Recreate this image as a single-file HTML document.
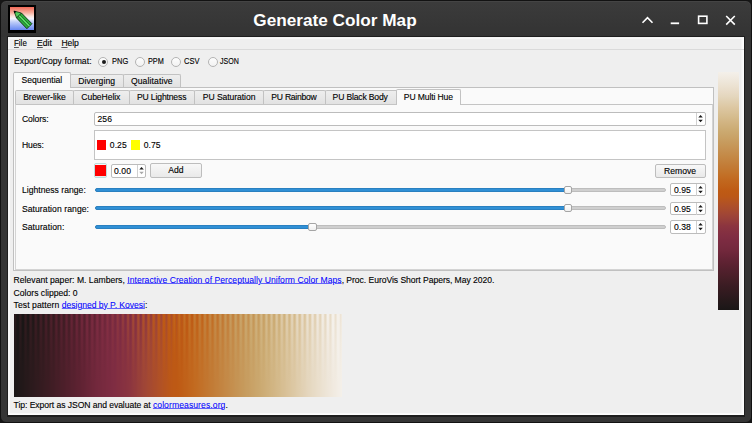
<!DOCTYPE html>
<html><head><meta charset="utf-8">
<style>
*{margin:0;padding:0;box-sizing:border-box}
html,body{width:752px;height:423px;overflow:hidden;background:#161616}
body{position:relative;font-family:"Liberation Sans",sans-serif;font-size:8.6px;color:#000;-webkit-text-stroke:0.12px #000}
.a{position:absolute}
.t{position:absolute;white-space:nowrap;line-height:10px;height:10px}
#frame{left:0;top:0;width:752px;height:423px;border-radius:6px;background:linear-gradient(#3b3b3b 2px,#333333 36px,#353535 36px);border:1px solid #121212;box-shadow:inset 0 1px 0 #444}
#content{left:8px;top:37px;width:736px;height:378px;background:#efefef;border:1px solid #fdfdfd;border-top-color:#f4f4f4;border-left-color:#f6f6f6;box-shadow:inset -1.5px -1px 0 #f9f9f9, inset 1px 1px 0 #f7f7f7}
#cshadow{left:7px;top:36px;width:738px;height:380.5px;background:#1e1e1e}
.title{left:0;top:9.5px;width:670px;text-align:center;color:#fff;-webkit-text-stroke:0;font-weight:bold;font-size:17.2px;line-height:20px;height:20px}
.u{text-decoration:underline;text-underline-offset:1px;text-decoration-color:#555}
.link{color:#0000ff;-webkit-text-stroke:0.05px #0000ff;text-decoration:underline;text-underline-offset:0px;text-decoration-color:rgba(40,40,255,0.7)}
.radio{width:10px;height:10px;border-radius:50%;border:1px solid #b4b4b4;background:linear-gradient(#fdfdfd,#f2f2f2)}
.dot{left:2.5px;top:2.5px;width:4px;height:4px;border-radius:50%;background:#1a1a1a}
.tab{border:1px solid #c2c2c2;border-bottom:none;background:linear-gradient(#eeeeee,#e2e2e2);border-radius:2px 2px 0 0}
.tab.sel{background:#fafafa}
.pane{border:1px solid #c4c4c4;background:#fafafa}
.spin{background:#fff;border:1px solid #bcbcbc;border-radius:2px}
.btn{border:1px solid #bdbdbd;border-radius:2px;background:linear-gradient(#f8f8f8,#e9e9e9)}
.track{height:4px;border-radius:2px;background:#cfcfcf;border:1px solid #bdbdbd}
.fill{height:4px;border-radius:2px;background:#3090d6;border:1px solid #2a80c0}
.handle{width:8.6px;height:8px;border-radius:2px;border:1px solid #a5a5a5;background:linear-gradient(#fefefe,#f0f0f0)}
</style></head><body>
<div id="frame" class="a"></div>
<!-- icon -->
<div class="a" style="left:8px;top:5px;width:28px;height:28px;background:#000"></div>
<div class="a" style="left:10px;top:7px;width:23.5px;height:23px;background:linear-gradient(#f06a58 0%,#f6b0a0 25%,#fbe4dc 40%,#f4f4fc 50%,#c0cef8 65%,#6888f2 100%)"></div>
<svg class="a" style="left:8px;top:5px" width="28" height="28" viewBox="0 0 28 28">
  <path d="M8.5 12.9 L13.4 8 L23.9 18.7 L18.9 23.7 Z" fill="#2fae3e" stroke="#0b2e12" stroke-width="0.9" stroke-linejoin="round"/>
  <path d="M11 10.5 L21.4 21.2" stroke="#5fe06a" stroke-width="1.4"/>
  <path d="M10.1 11.3 L20.6 22 M11.8 9.6 L22.3 20.3" stroke="#0e4a18" stroke-width="0.6"/>
  <path d="M6.1 6.1 L13.4 8 L8.5 12.9 Z" fill="#52cc5c" stroke="#0b2e12" stroke-width="0.8" stroke-linejoin="round"/>
  <path d="M5.7 5.7 L8.4 6.5 L6.5 8.4 Z" fill="#000"/>
</svg>
<div class="t title">Generate Color Map</div>
<!-- title buttons -->
<svg class="a" style="left:630px;top:5px" width="120" height="30" viewBox="0 0 120 30">
  <path d="M12.5 17.8 L17.5 12.6 L22.5 17.8" fill="none" stroke="#fff" stroke-width="1.6"/>
  <path d="M40.7 18.3 H49.1" fill="none" stroke="#fff" stroke-width="1.8"/>
  <rect x="68.6" y="11.2" width="8.3" height="7.2" fill="none" stroke="#fff" stroke-width="1.6"/>
  <path d="M96.2 11 L104.8 19.6 M104.8 11 L96.2 19.6" fill="none" stroke="#fff" stroke-width="1.6"/>
</svg>
<div id="cshadow" class="a"></div>
<div id="content" class="a"></div>
<!-- menu -->
<div class="t" style="transform:scaleX(0.925);transform-origin:0 0;left:14px;top:38px"><span class="u">F</span>ile</div>
<div class="t" style="letter-spacing:0.004px;left:37px;top:38px"><span class="u">E</span>dit</div>
<div class="t" style="letter-spacing:-0.056px;left:61.4px;top:38px"><span class="u">H</span>elp</div>
<div class="a" style="left:8px;top:49px;width:736px;height:1px;background:#dadada"></div>
<!-- export format -->
<div class="t" style="letter-spacing:0.062px;left:14px;top:56px">Export/Copy format:</div>
<div class="a radio" style="left:98px;top:56.7px"><div class="a dot"></div></div>
<div class="t" style="transform:scaleX(0.874);transform-origin:0 0;left:111.7px;top:56px">PNG</div>
<div class="a radio" style="left:134.8px;top:56.7px"></div>
<div class="t" style="transform:scaleX(0.850);transform-origin:0 0;left:148.3px;top:56px">PPM</div>
<div class="a radio" style="left:171px;top:56.7px"></div>
<div class="t" style="transform:scaleX(0.874);transform-origin:0 0;left:184px;top:56px">CSV</div>
<div class="a radio" style="left:207.6px;top:56.7px"></div>
<div class="t" style="transform:scaleX(0.823);transform-origin:0 0;left:220.3px;top:56px">JSON</div>
<!-- outer pane & tabs -->
<div class="a pane" style="left:13px;top:87px;width:701px;height:184px;border-color:#c0c0c0"></div>
<div class="a tab" style="left:70px;top:73.5px;width:54px;height:13.5px"></div>
<div class="t" style="letter-spacing:0.074px;left:78.2px;top:75.5px">Diverging</div>
<div class="a tab" style="left:123px;top:73.5px;width:58px;height:13.5px"></div>
<div class="t" style="letter-spacing:0.116px;left:130.9px;top:75.5px">Qualitative</div>
<div class="a tab sel" style="left:13px;top:72px;width:58px;height:16px"></div>
<div class="t" style="letter-spacing:0.017px;left:21.5px;top:75px">Sequential</div>
<!-- inner pane & tabs -->
<div class="a pane" style="left:15px;top:104px;width:698px;height:166px;border-color:#d4d4d4;border-top-color:#c4c4c4"></div>
<div class="a tab" style="left:15px;top:90px;width:59px;height:14px"></div>
<div class="t" style="letter-spacing:-0.048px;left:23.2px;top:92px">Brewer-like</div>
<div class="a tab" style="left:73px;top:90px;width:57px;height:14px"></div>
<div class="t" style="letter-spacing:-0.070px;left:81.3px;top:92px">CubeHelix</div>
<div class="a tab" style="left:129px;top:90px;width:66px;height:14px"></div>
<div class="t" style="letter-spacing:-0.152px;left:137px;top:92px">PU Lightness</div>
<div class="a tab" style="left:194px;top:90px;width:70px;height:14px"></div>
<div class="t" style="letter-spacing:-0.073px;left:202.8px;top:92px">PU Saturation</div>
<div class="a tab" style="left:263px;top:90px;width:63px;height:14px"></div>
<div class="t" style="letter-spacing:-0.249px;left:271.3px;top:92px">PU Rainbow</div>
<div class="a tab" style="left:325px;top:90px;width:73px;height:14px"></div>
<div class="t" style="letter-spacing:-0.169px;left:332.6px;top:92px">PU Black Body</div>
<div class="a tab sel" style="left:396.3px;top:89px;width:64.5px;height:16px"></div>
<div class="t" style="letter-spacing:-0.126px;left:403.8px;top:91.5px">PU Multi Hue</div>
<!-- form -->
<div class="t" style="letter-spacing:-0.096px;left:21.9px;top:114px">Colors:</div>
<div class="a spin" style="left:94px;top:112px;width:611.5px;height:14px"></div>
<div class="a" style="left:696px;top:113px;width:1px;height:12px;background:#d0d0d0"></div>
<svg class="a" style="left:697px;top:113.0px" width="8" height="12"><path d="M1.3 4.5 L3.55 1.9 L5.8 4.5Z M1.3 6.8 L3.55 9.2 L5.8 6.8Z" fill="#1a1a1a"/></svg>
<div class="t" style="letter-spacing:0.091px;left:97.4px;top:114px">256</div>
<div class="t" style="letter-spacing:-0.113px;left:21.9px;top:140px">Hues:</div>
<div class="a" style="left:94px;top:130px;width:612px;height:30px;background:#fff;border:1px solid #c4c4c4"></div>
<div class="a" style="left:96.5px;top:140px;width:9.5px;height:9.5px;background:#ff0000"></div>
<div class="t" style="letter-spacing:0.079px;left:109.8px;top:140px">0.25</div>
<div class="a" style="left:130.6px;top:140px;width:9.5px;height:9.5px;background:#ffff00"></div>
<div class="t" style="letter-spacing:0.079px;left:143.7px;top:140px">0.75</div>
<div class="a btn" style="left:94.4px;top:163.4px;width:12.2px;height:14.2px;border-color:#bfdcdc"></div>
<div class="a" style="left:95.2px;top:165px;width:10.6px;height:11px;background:#ff0000"></div>
<div class="a spin" style="left:110.8px;top:164.2px;width:34.8px;height:13.4px"></div>
<div class="a" style="left:136.5px;top:165px;width:1px;height:12px;background:#d0d0d0"></div>
<svg class="a" style="left:137.5px;top:164.9px" width="8" height="12"><path d="M1.3 4.5 L3.55 1.9 L5.8 4.5Z" fill="#1a1a1a"/><path d="M1.3 6.8 L3.55 9.2 L5.8 6.8Z" fill="#a8a8a8"/></svg>
<div class="t" style="letter-spacing:0.079px;left:114px;top:165.5px">0.00</div>
<div class="a btn" style="left:150.2px;top:163px;width:51.4px;height:14.5px"></div>
<div class="t" style="left:150.2px;top:165px;width:51.4px;text-align:center">Add</div>
<div class="a btn" style="left:654.6px;top:163.9px;width:51px;height:13.8px"></div>
<div class="t" style="left:654.6px;top:165.5px;width:51px;text-align:center">Remove</div>
<!-- sliders -->
<div class="t" style="letter-spacing:0.023px;left:21.9px;top:185px">Lightness range:</div>
<div class="a track" style="left:94.8px;top:187.6px;width:571px"></div>
<div class="a fill" style="left:94.8px;top:187.6px;width:472px"></div>
<div class="a handle" style="left:563.8px;top:185.5px"></div>
<div class="a spin" style="left:670.3px;top:183.3px;width:35.3px;height:13.2px"></div>
<div class="a" style="left:696.4px;top:184px;width:1px;height:12px;background:#d0d0d0"></div>
<svg class="a" style="left:697px;top:184.0px" width="8" height="12"><path d="M1.3 4.5 L3.55 1.9 L5.8 4.5Z M1.3 6.8 L3.55 9.2 L5.8 6.8Z" fill="#1a1a1a"/></svg>
<div class="t" style="letter-spacing:0.079px;left:673.9px;top:185px">0.95</div>

<div class="t" style="letter-spacing:0.073px;left:21.9px;top:203.7px">Saturation range:</div>
<div class="a track" style="left:94.8px;top:206.4px;width:571px"></div>
<div class="a fill" style="left:94.8px;top:206.4px;width:472px"></div>
<div class="a handle" style="left:563.8px;top:204.2px"></div>
<div class="a spin" style="left:670.3px;top:201.8px;width:35.3px;height:13.2px"></div>
<div class="a" style="left:696.4px;top:202.5px;width:1px;height:12px;background:#d0d0d0"></div>
<svg class="a" style="left:697px;top:202.5px" width="8" height="12"><path d="M1.3 4.5 L3.55 1.9 L5.8 4.5Z M1.3 6.8 L3.55 9.2 L5.8 6.8Z" fill="#1a1a1a"/></svg>
<div class="t" style="letter-spacing:0.079px;left:673.9px;top:203.7px">0.95</div>

<div class="t" style="letter-spacing:0.083px;left:21.9px;top:222.3px">Saturation:</div>
<div class="a track" style="left:94.8px;top:225.1px;width:571px"></div>
<div class="a fill" style="left:94.8px;top:225.1px;width:216px"></div>
<div class="a handle" style="left:308.2px;top:222.6px"></div>
<div class="a spin" style="left:670.3px;top:220.4px;width:35.3px;height:13.2px"></div>
<div class="a" style="left:696.4px;top:221px;width:1px;height:12px;background:#d0d0d0"></div>
<svg class="a" style="left:697px;top:221.1px" width="8" height="12"><path d="M1.3 4.5 L3.55 1.9 L5.8 4.5Z M1.3 6.8 L3.55 9.2 L5.8 6.8Z" fill="#1a1a1a"/></svg>
<div class="t" style="letter-spacing:0.079px;left:673.9px;top:222.3px">0.38</div>

<!-- vertical colorbar -->
<div class="a" style="left:718px;top:72px;width:20.5px;height:238px;background:linear-gradient(to bottom,#f4f0ea 0.0%,#f1ebe2 2.1%,#eee6d9 4.2%,#ebe1d0 6.2%,#e8dbc7 8.3%,#e4d6bd 10.4%,#e0cfb0 12.5%,#ddc8a4 14.6%,#d9c299 16.7%,#d5bc8e 18.8%,#d2b584 20.8%,#ceaf7a 22.9%,#cba970 25.0%,#c9a368 27.1%,#c79c5f 29.2%,#c69657 31.2%,#c58f4f 33.3%,#c48946 35.4%,#c3823e 37.5%,#c27b36 39.6%,#c2752d 41.7%,#c26e25 43.8%,#c1671e 45.8%,#c06119 47.9%,#be5a14 50.0%,#bc5816 52.1%,#b55420 54.2%,#ae4f29 56.2%,#a64a30 58.3%,#9e4437 60.4%,#953d3b 62.5%,#8c353f 64.6%,#863141 66.7%,#812e42 68.8%,#7c2b41 70.8%,#772a3f 72.9%,#72283c 75.0%,#6a2538 77.1%,#612334 79.2%,#5a2130 81.2%,#52202d 83.3%,#4b1f29 85.4%,#431e26 87.5%,#3b1c23 89.6%,#351b20 91.7%,#2e1a1e 93.8%,#27191b 95.8%,#211819 97.9%,#1a1616 100.0%)"></div>

<!-- bottom text -->
<div class="t nofix" style="left:13.6px;top:275px"><span style="letter-spacing:0.015px">Relevant paper: M. Lambers, </span><span class="link" style="letter-spacing:0.035px">Interactive Creation of Perceptually Uniform Color Maps</span><span style="letter-spacing:-0.052px">, Proc. EuroVis Short Papers, May 2020.</span></div>
<div class="t" style="letter-spacing:0.002px;left:13.6px;top:287.7px">Colors clipped: 0</div>
<div class="t nofix" style="left:13.6px;top:300.4px"><span style="letter-spacing:0.075px">Test pattern </span><span class="link" style="letter-spacing:-0.042px">designed by P. Kovesi</span>:</div>
<svg width="328" height="83" viewBox="0 0 328 83" style="position:absolute;left:14px;top:314px;display:block" shape-rendering="crispEdges"><defs><linearGradient id="g0" x1="0" y1="0" x2="0" y2="1"><stop offset="0.00" stop-color="#24181a"/><stop offset="0.17" stop-color="#211819"/><stop offset="0.33" stop-color="#1f1718"/><stop offset="0.50" stop-color="#1d1717"/><stop offset="0.67" stop-color="#1c1617"/><stop offset="0.83" stop-color="#1b1616"/><stop offset="1.00" stop-color="#1a1616"/></linearGradient><linearGradient id="g1" x1="0" y1="0" x2="0" y2="1"><stop offset="0.00" stop-color="#2b1a1c"/><stop offset="0.17" stop-color="#26191b"/><stop offset="0.33" stop-color="#221819"/><stop offset="0.50" stop-color="#1f1718"/><stop offset="0.67" stop-color="#1d1717"/><stop offset="0.83" stop-color="#1c1617"/><stop offset="1.00" stop-color="#1b1617"/></linearGradient><linearGradient id="g2" x1="0" y1="0" x2="0" y2="1"><stop offset="0.00" stop-color="#1e1717"/><stop offset="0.17" stop-color="#1d1717"/><stop offset="0.33" stop-color="#1d1717"/><stop offset="0.50" stop-color="#1d1717"/><stop offset="0.67" stop-color="#1d1717"/><stop offset="0.83" stop-color="#1c1717"/><stop offset="1.00" stop-color="#1c1717"/></linearGradient><linearGradient id="g3" x1="0" y1="0" x2="0" y2="1"><stop offset="0.00" stop-color="#1a1616"/><stop offset="0.17" stop-color="#1a1616"/><stop offset="0.33" stop-color="#1a1616"/><stop offset="0.50" stop-color="#1a1616"/><stop offset="0.67" stop-color="#1c1617"/><stop offset="0.83" stop-color="#1d1717"/><stop offset="1.00" stop-color="#1d1717"/></linearGradient><linearGradient id="g4" x1="0" y1="0" x2="0" y2="1"><stop offset="0.00" stop-color="#1a1616"/><stop offset="0.17" stop-color="#1a1616"/><stop offset="0.33" stop-color="#1a1616"/><stop offset="0.50" stop-color="#1c1617"/><stop offset="0.67" stop-color="#1d1717"/><stop offset="0.83" stop-color="#1e1718"/><stop offset="1.00" stop-color="#1e1718"/></linearGradient><linearGradient id="g5" x1="0" y1="0" x2="0" y2="1"><stop offset="0.00" stop-color="#26191b"/><stop offset="0.17" stop-color="#24191a"/><stop offset="0.33" stop-color="#231819"/><stop offset="0.50" stop-color="#211819"/><stop offset="0.67" stop-color="#201818"/><stop offset="0.83" stop-color="#201718"/><stop offset="1.00" stop-color="#1f1718"/></linearGradient><linearGradient id="g6" x1="0" y1="0" x2="0" y2="1"><stop offset="0.00" stop-color="#301b1e"/><stop offset="0.17" stop-color="#2b1a1d"/><stop offset="0.33" stop-color="#27191b"/><stop offset="0.50" stop-color="#24191a"/><stop offset="0.67" stop-color="#221819"/><stop offset="0.83" stop-color="#211819"/><stop offset="1.00" stop-color="#201818"/></linearGradient><linearGradient id="g7" x1="0" y1="0" x2="0" y2="1"><stop offset="0.00" stop-color="#25191a"/><stop offset="0.17" stop-color="#24181a"/><stop offset="0.33" stop-color="#231819"/><stop offset="0.50" stop-color="#221819"/><stop offset="0.67" stop-color="#221819"/><stop offset="0.83" stop-color="#211819"/><stop offset="1.00" stop-color="#211819"/></linearGradient><linearGradient id="g8" x1="0" y1="0" x2="0" y2="1"><stop offset="0.00" stop-color="#1a1616"/><stop offset="0.17" stop-color="#1a1616"/><stop offset="0.33" stop-color="#1c1717"/><stop offset="0.50" stop-color="#1f1718"/><stop offset="0.67" stop-color="#211819"/><stop offset="0.83" stop-color="#221819"/><stop offset="1.00" stop-color="#221819"/></linearGradient><linearGradient id="g9" x1="0" y1="0" x2="0" y2="1"><stop offset="0.00" stop-color="#1a1616"/><stop offset="0.17" stop-color="#1a1616"/><stop offset="0.33" stop-color="#1e1717"/><stop offset="0.50" stop-color="#201818"/><stop offset="0.67" stop-color="#221819"/><stop offset="0.83" stop-color="#231819"/><stop offset="1.00" stop-color="#231819"/></linearGradient><linearGradient id="g10" x1="0" y1="0" x2="0" y2="1"><stop offset="0.00" stop-color="#291a1c"/><stop offset="0.17" stop-color="#28191b"/><stop offset="0.33" stop-color="#26191b"/><stop offset="0.50" stop-color="#25191a"/><stop offset="0.67" stop-color="#25191a"/><stop offset="0.83" stop-color="#24191a"/><stop offset="1.00" stop-color="#24191a"/></linearGradient><linearGradient id="g11" x1="0" y1="0" x2="0" y2="1"><stop offset="0.00" stop-color="#351b20"/><stop offset="0.17" stop-color="#301b1e"/><stop offset="0.33" stop-color="#2c1a1d"/><stop offset="0.50" stop-color="#291a1c"/><stop offset="0.67" stop-color="#27191b"/><stop offset="0.83" stop-color="#26191a"/><stop offset="1.00" stop-color="#25191a"/></linearGradient><linearGradient id="g12" x1="0" y1="0" x2="0" y2="1"><stop offset="0.00" stop-color="#2c1a1d"/><stop offset="0.17" stop-color="#2a1a1c"/><stop offset="0.33" stop-color="#291a1c"/><stop offset="0.50" stop-color="#28191b"/><stop offset="0.67" stop-color="#27191b"/><stop offset="0.83" stop-color="#26191b"/><stop offset="1.00" stop-color="#26191b"/></linearGradient><linearGradient id="g13" x1="0" y1="0" x2="0" y2="1"><stop offset="0.00" stop-color="#1b1616"/><stop offset="0.17" stop-color="#1f1718"/><stop offset="0.33" stop-color="#221819"/><stop offset="0.50" stop-color="#24191a"/><stop offset="0.67" stop-color="#26191a"/><stop offset="0.83" stop-color="#27191b"/><stop offset="1.00" stop-color="#27191b"/></linearGradient><linearGradient id="g14" x1="0" y1="0" x2="0" y2="1"><stop offset="0.00" stop-color="#1a1616"/><stop offset="0.17" stop-color="#1e1718"/><stop offset="0.33" stop-color="#221819"/><stop offset="0.50" stop-color="#25191a"/><stop offset="0.67" stop-color="#27191b"/><stop offset="0.83" stop-color="#28191b"/><stop offset="1.00" stop-color="#281a1b"/></linearGradient><linearGradient id="g15" x1="0" y1="0" x2="0" y2="1"><stop offset="0.00" stop-color="#2c1a1d"/><stop offset="0.17" stop-color="#2b1a1c"/><stop offset="0.33" stop-color="#2a1a1c"/><stop offset="0.50" stop-color="#2a1a1c"/><stop offset="0.67" stop-color="#291a1c"/><stop offset="0.83" stop-color="#291a1c"/><stop offset="1.00" stop-color="#291a1c"/></linearGradient><linearGradient id="g16" x1="0" y1="0" x2="0" y2="1"><stop offset="0.00" stop-color="#3a1c22"/><stop offset="0.17" stop-color="#351b20"/><stop offset="0.33" stop-color="#311b1f"/><stop offset="0.50" stop-color="#2e1b1e"/><stop offset="0.67" stop-color="#2c1a1d"/><stop offset="0.83" stop-color="#2b1a1c"/><stop offset="1.00" stop-color="#2a1a1c"/></linearGradient><linearGradient id="g17" x1="0" y1="0" x2="0" y2="1"><stop offset="0.00" stop-color="#331b1f"/><stop offset="0.17" stop-color="#311b1f"/><stop offset="0.33" stop-color="#2f1b1e"/><stop offset="0.50" stop-color="#2d1a1d"/><stop offset="0.67" stop-color="#2c1a1d"/><stop offset="0.83" stop-color="#2b1a1c"/><stop offset="1.00" stop-color="#2b1a1c"/></linearGradient><linearGradient id="g18" x1="0" y1="0" x2="0" y2="1"><stop offset="0.00" stop-color="#221819"/><stop offset="0.17" stop-color="#25191a"/><stop offset="0.33" stop-color="#28191b"/><stop offset="0.50" stop-color="#2a1a1c"/><stop offset="0.67" stop-color="#2b1a1c"/><stop offset="0.83" stop-color="#2c1a1d"/><stop offset="1.00" stop-color="#2c1a1d"/></linearGradient><linearGradient id="g19" x1="0" y1="0" x2="0" y2="1"><stop offset="0.00" stop-color="#1e1717"/><stop offset="0.17" stop-color="#231819"/><stop offset="0.33" stop-color="#26191b"/><stop offset="0.50" stop-color="#291a1c"/><stop offset="0.67" stop-color="#2b1a1d"/><stop offset="0.83" stop-color="#2d1a1d"/><stop offset="1.00" stop-color="#2d1a1d"/></linearGradient><linearGradient id="g20" x1="0" y1="0" x2="0" y2="1"><stop offset="0.00" stop-color="#2e1a1d"/><stop offset="0.17" stop-color="#2e1a1d"/><stop offset="0.33" stop-color="#2e1a1d"/><stop offset="0.50" stop-color="#2e1a1d"/><stop offset="0.67" stop-color="#2e1a1d"/><stop offset="0.83" stop-color="#2e1a1e"/><stop offset="1.00" stop-color="#2e1a1e"/></linearGradient><linearGradient id="g21" x1="0" y1="0" x2="0" y2="1"><stop offset="0.00" stop-color="#3f1d24"/><stop offset="0.17" stop-color="#391c22"/><stop offset="0.33" stop-color="#361b20"/><stop offset="0.50" stop-color="#331b1f"/><stop offset="0.67" stop-color="#311b1e"/><stop offset="0.83" stop-color="#2f1b1e"/><stop offset="1.00" stop-color="#2f1b1e"/></linearGradient><linearGradient id="g22" x1="0" y1="0" x2="0" y2="1"><stop offset="0.00" stop-color="#3a1c22"/><stop offset="0.17" stop-color="#371c21"/><stop offset="0.33" stop-color="#341b20"/><stop offset="0.50" stop-color="#321b1f"/><stop offset="0.67" stop-color="#311b1f"/><stop offset="0.83" stop-color="#301b1e"/><stop offset="1.00" stop-color="#301b1e"/></linearGradient><linearGradient id="g23" x1="0" y1="0" x2="0" y2="1"><stop offset="0.00" stop-color="#291a1c"/><stop offset="0.17" stop-color="#2b1a1c"/><stop offset="0.33" stop-color="#2d1a1d"/><stop offset="0.50" stop-color="#2f1b1e"/><stop offset="0.67" stop-color="#301b1e"/><stop offset="0.83" stop-color="#311b1f"/><stop offset="1.00" stop-color="#311b1f"/></linearGradient><linearGradient id="g24" x1="0" y1="0" x2="0" y2="1"><stop offset="0.00" stop-color="#221819"/><stop offset="0.17" stop-color="#27191b"/><stop offset="0.33" stop-color="#2b1a1c"/><stop offset="0.50" stop-color="#2e1a1d"/><stop offset="0.67" stop-color="#301b1e"/><stop offset="0.83" stop-color="#311b1f"/><stop offset="1.00" stop-color="#321b1f"/></linearGradient><linearGradient id="g25" x1="0" y1="0" x2="0" y2="1"><stop offset="0.00" stop-color="#301b1e"/><stop offset="0.17" stop-color="#311b1f"/><stop offset="0.33" stop-color="#321b1f"/><stop offset="0.50" stop-color="#321b1f"/><stop offset="0.67" stop-color="#331b1f"/><stop offset="0.83" stop-color="#331b1f"/><stop offset="1.00" stop-color="#331b1f"/></linearGradient><linearGradient id="g26" x1="0" y1="0" x2="0" y2="1"><stop offset="0.00" stop-color="#431d26"/><stop offset="0.17" stop-color="#3e1d24"/><stop offset="0.33" stop-color="#3a1c22"/><stop offset="0.50" stop-color="#371c21"/><stop offset="0.67" stop-color="#351b20"/><stop offset="0.83" stop-color="#341b20"/><stop offset="1.00" stop-color="#341b20"/></linearGradient><linearGradient id="g27" x1="0" y1="0" x2="0" y2="1"><stop offset="0.00" stop-color="#421d25"/><stop offset="0.17" stop-color="#3e1d24"/><stop offset="0.33" stop-color="#3a1c22"/><stop offset="0.50" stop-color="#381c21"/><stop offset="0.67" stop-color="#361c21"/><stop offset="0.83" stop-color="#351b20"/><stop offset="1.00" stop-color="#351b20"/></linearGradient><linearGradient id="g28" x1="0" y1="0" x2="0" y2="1"><stop offset="0.00" stop-color="#301b1e"/><stop offset="0.17" stop-color="#321b1f"/><stop offset="0.33" stop-color="#331b1f"/><stop offset="0.50" stop-color="#341b20"/><stop offset="0.67" stop-color="#351b20"/><stop offset="0.83" stop-color="#361b20"/><stop offset="1.00" stop-color="#361b20"/></linearGradient><linearGradient id="g29" x1="0" y1="0" x2="0" y2="1"><stop offset="0.00" stop-color="#27191b"/><stop offset="0.17" stop-color="#2c1a1d"/><stop offset="0.33" stop-color="#301b1e"/><stop offset="0.50" stop-color="#331b1f"/><stop offset="0.67" stop-color="#351b20"/><stop offset="0.83" stop-color="#361c21"/><stop offset="1.00" stop-color="#371c21"/></linearGradient><linearGradient id="g30" x1="0" y1="0" x2="0" y2="1"><stop offset="0.00" stop-color="#331b1f"/><stop offset="0.17" stop-color="#341b20"/><stop offset="0.33" stop-color="#361b20"/><stop offset="0.50" stop-color="#371c21"/><stop offset="0.67" stop-color="#371c21"/><stop offset="0.83" stop-color="#381c21"/><stop offset="1.00" stop-color="#381c21"/></linearGradient><linearGradient id="g31" x1="0" y1="0" x2="0" y2="1"><stop offset="0.00" stop-color="#471e28"/><stop offset="0.17" stop-color="#431d26"/><stop offset="0.33" stop-color="#3f1d24"/><stop offset="0.50" stop-color="#3c1c23"/><stop offset="0.67" stop-color="#3a1c22"/><stop offset="0.83" stop-color="#391c22"/><stop offset="1.00" stop-color="#391c22"/></linearGradient><linearGradient id="g32" x1="0" y1="0" x2="0" y2="1"><stop offset="0.00" stop-color="#491e29"/><stop offset="0.17" stop-color="#441e27"/><stop offset="0.33" stop-color="#401d25"/><stop offset="0.50" stop-color="#3d1d24"/><stop offset="0.67" stop-color="#3b1c23"/><stop offset="0.83" stop-color="#3a1c22"/><stop offset="1.00" stop-color="#3a1c22"/></linearGradient><linearGradient id="g33" x1="0" y1="0" x2="0" y2="1"><stop offset="0.00" stop-color="#371c21"/><stop offset="0.17" stop-color="#381c21"/><stop offset="0.33" stop-color="#391c22"/><stop offset="0.50" stop-color="#3a1c22"/><stop offset="0.67" stop-color="#3a1c22"/><stop offset="0.83" stop-color="#3b1c22"/><stop offset="1.00" stop-color="#3b1c22"/></linearGradient><linearGradient id="g34" x1="0" y1="0" x2="0" y2="1"><stop offset="0.00" stop-color="#2c1a1d"/><stop offset="0.17" stop-color="#311b1e"/><stop offset="0.33" stop-color="#351b20"/><stop offset="0.50" stop-color="#381c21"/><stop offset="0.67" stop-color="#3a1c22"/><stop offset="0.83" stop-color="#3b1c23"/><stop offset="1.00" stop-color="#3c1c23"/></linearGradient><linearGradient id="g35" x1="0" y1="0" x2="0" y2="1"><stop offset="0.00" stop-color="#361b20"/><stop offset="0.17" stop-color="#381c21"/><stop offset="0.33" stop-color="#391c22"/><stop offset="0.50" stop-color="#3b1c22"/><stop offset="0.67" stop-color="#3c1c23"/><stop offset="0.83" stop-color="#3d1c23"/><stop offset="1.00" stop-color="#3d1c23"/></linearGradient><linearGradient id="g36" x1="0" y1="0" x2="0" y2="1"><stop offset="0.00" stop-color="#4b1f29"/><stop offset="0.17" stop-color="#471e28"/><stop offset="0.33" stop-color="#441e26"/><stop offset="0.50" stop-color="#411d25"/><stop offset="0.67" stop-color="#3f1d24"/><stop offset="0.83" stop-color="#3e1d24"/><stop offset="1.00" stop-color="#3e1d24"/></linearGradient><linearGradient id="g37" x1="0" y1="0" x2="0" y2="1"><stop offset="0.00" stop-color="#50202c"/><stop offset="0.17" stop-color="#4b1f29"/><stop offset="0.33" stop-color="#461e28"/><stop offset="0.50" stop-color="#431e26"/><stop offset="0.67" stop-color="#411d25"/><stop offset="0.83" stop-color="#401d24"/><stop offset="1.00" stop-color="#3f1d24"/></linearGradient><linearGradient id="g38" x1="0" y1="0" x2="0" y2="1"><stop offset="0.00" stop-color="#3f1d24"/><stop offset="0.17" stop-color="#3f1d24"/><stop offset="0.33" stop-color="#401d25"/><stop offset="0.50" stop-color="#401d25"/><stop offset="0.67" stop-color="#401d25"/><stop offset="0.83" stop-color="#401d25"/><stop offset="1.00" stop-color="#401d25"/></linearGradient><linearGradient id="g39" x1="0" y1="0" x2="0" y2="1"><stop offset="0.00" stop-color="#311b1f"/><stop offset="0.17" stop-color="#361b20"/><stop offset="0.33" stop-color="#3a1c22"/><stop offset="0.50" stop-color="#3d1d23"/><stop offset="0.67" stop-color="#3f1d24"/><stop offset="0.83" stop-color="#411d25"/><stop offset="1.00" stop-color="#411d25"/></linearGradient><linearGradient id="g40" x1="0" y1="0" x2="0" y2="1"><stop offset="0.00" stop-color="#381c21"/><stop offset="0.17" stop-color="#3b1c23"/><stop offset="0.33" stop-color="#3e1d24"/><stop offset="0.50" stop-color="#401d25"/><stop offset="0.67" stop-color="#411d25"/><stop offset="0.83" stop-color="#421d26"/><stop offset="1.00" stop-color="#421d26"/></linearGradient><linearGradient id="g41" x1="0" y1="0" x2="0" y2="1"><stop offset="0.00" stop-color="#4e1f2b"/><stop offset="0.17" stop-color="#4b1f29"/><stop offset="0.33" stop-color="#481e28"/><stop offset="0.50" stop-color="#461e27"/><stop offset="0.67" stop-color="#451e27"/><stop offset="0.83" stop-color="#441e26"/><stop offset="1.00" stop-color="#441e26"/></linearGradient><linearGradient id="g42" x1="0" y1="0" x2="0" y2="1"><stop offset="0.00" stop-color="#56212e"/><stop offset="0.17" stop-color="#51202c"/><stop offset="0.33" stop-color="#4c1f2a"/><stop offset="0.50" stop-color="#491e29"/><stop offset="0.67" stop-color="#471e28"/><stop offset="0.83" stop-color="#451e27"/><stop offset="1.00" stop-color="#451e27"/></linearGradient><linearGradient id="g43" x1="0" y1="0" x2="0" y2="1"><stop offset="0.00" stop-color="#471e28"/><stop offset="0.17" stop-color="#471e28"/><stop offset="0.33" stop-color="#461e27"/><stop offset="0.50" stop-color="#461e27"/><stop offset="0.67" stop-color="#461e27"/><stop offset="0.83" stop-color="#461e27"/><stop offset="1.00" stop-color="#461e27"/></linearGradient><linearGradient id="g44" x1="0" y1="0" x2="0" y2="1"><stop offset="0.00" stop-color="#371c21"/><stop offset="0.17" stop-color="#3b1c23"/><stop offset="0.33" stop-color="#401d24"/><stop offset="0.50" stop-color="#431d26"/><stop offset="0.67" stop-color="#451e27"/><stop offset="0.83" stop-color="#461e28"/><stop offset="1.00" stop-color="#471e28"/></linearGradient><linearGradient id="g45" x1="0" y1="0" x2="0" y2="1"><stop offset="0.00" stop-color="#3b1c23"/><stop offset="0.17" stop-color="#3f1d24"/><stop offset="0.33" stop-color="#421d26"/><stop offset="0.50" stop-color="#451e27"/><stop offset="0.67" stop-color="#471e28"/><stop offset="0.83" stop-color="#481e28"/><stop offset="1.00" stop-color="#481e28"/></linearGradient><linearGradient id="g46" x1="0" y1="0" x2="0" y2="1"><stop offset="0.00" stop-color="#51202c"/><stop offset="0.17" stop-color="#4f1f2b"/><stop offset="0.33" stop-color="#4d1f2a"/><stop offset="0.50" stop-color="#4b1f2a"/><stop offset="0.67" stop-color="#4a1f29"/><stop offset="0.83" stop-color="#491f29"/><stop offset="1.00" stop-color="#491f29"/></linearGradient><linearGradient id="g47" x1="0" y1="0" x2="0" y2="1"><stop offset="0.00" stop-color="#5c2231"/><stop offset="0.17" stop-color="#57212f"/><stop offset="0.33" stop-color="#52202d"/><stop offset="0.50" stop-color="#4f1f2b"/><stop offset="0.67" stop-color="#4c1f2a"/><stop offset="0.83" stop-color="#4b1f29"/><stop offset="1.00" stop-color="#4a1f29"/></linearGradient><linearGradient id="g48" x1="0" y1="0" x2="0" y2="1"><stop offset="0.00" stop-color="#4f202b"/><stop offset="0.17" stop-color="#4e1f2b"/><stop offset="0.33" stop-color="#4d1f2a"/><stop offset="0.50" stop-color="#4c1f2a"/><stop offset="0.67" stop-color="#4c1f2a"/><stop offset="0.83" stop-color="#4b1f2a"/><stop offset="1.00" stop-color="#4b1f2a"/></linearGradient><linearGradient id="g49" x1="0" y1="0" x2="0" y2="1"><stop offset="0.00" stop-color="#3d1d23"/><stop offset="0.17" stop-color="#421d25"/><stop offset="0.33" stop-color="#461e27"/><stop offset="0.50" stop-color="#491e28"/><stop offset="0.67" stop-color="#4b1f29"/><stop offset="0.83" stop-color="#4c1f2a"/><stop offset="1.00" stop-color="#4c1f2a"/></linearGradient><linearGradient id="g50" x1="0" y1="0" x2="0" y2="1"><stop offset="0.00" stop-color="#3f1d24"/><stop offset="0.17" stop-color="#431e26"/><stop offset="0.33" stop-color="#471e28"/><stop offset="0.50" stop-color="#4a1f29"/><stop offset="0.67" stop-color="#4c1f2a"/><stop offset="0.83" stop-color="#4d1f2a"/><stop offset="1.00" stop-color="#4d1f2b"/></linearGradient><linearGradient id="g51" x1="0" y1="0" x2="0" y2="1"><stop offset="0.00" stop-color="#54202e"/><stop offset="0.17" stop-color="#52202d"/><stop offset="0.33" stop-color="#51202c"/><stop offset="0.50" stop-color="#50202c"/><stop offset="0.67" stop-color="#4f202b"/><stop offset="0.83" stop-color="#4f1f2b"/><stop offset="1.00" stop-color="#4f1f2b"/></linearGradient><linearGradient id="g52" x1="0" y1="0" x2="0" y2="1"><stop offset="0.00" stop-color="#622334"/><stop offset="0.17" stop-color="#5c2231"/><stop offset="0.33" stop-color="#58212f"/><stop offset="0.50" stop-color="#54202e"/><stop offset="0.67" stop-color="#52202c"/><stop offset="0.83" stop-color="#50202c"/><stop offset="1.00" stop-color="#50202c"/></linearGradient><linearGradient id="g53" x1="0" y1="0" x2="0" y2="1"><stop offset="0.00" stop-color="#57212f"/><stop offset="0.17" stop-color="#55212e"/><stop offset="0.33" stop-color="#54202d"/><stop offset="0.50" stop-color="#52202d"/><stop offset="0.67" stop-color="#51202c"/><stop offset="0.83" stop-color="#51202c"/><stop offset="1.00" stop-color="#51202c"/></linearGradient><linearGradient id="g54" x1="0" y1="0" x2="0" y2="1"><stop offset="0.00" stop-color="#441e27"/><stop offset="0.17" stop-color="#481e28"/><stop offset="0.33" stop-color="#4c1f2a"/><stop offset="0.50" stop-color="#4e1f2b"/><stop offset="0.67" stop-color="#50202c"/><stop offset="0.83" stop-color="#51202c"/><stop offset="1.00" stop-color="#52202d"/></linearGradient><linearGradient id="g55" x1="0" y1="0" x2="0" y2="1"><stop offset="0.00" stop-color="#431e26"/><stop offset="0.17" stop-color="#481e28"/><stop offset="0.33" stop-color="#4c1f2a"/><stop offset="0.50" stop-color="#4f1f2b"/><stop offset="0.67" stop-color="#51202c"/><stop offset="0.83" stop-color="#52202d"/><stop offset="1.00" stop-color="#53202d"/></linearGradient><linearGradient id="g56" x1="0" y1="0" x2="0" y2="1"><stop offset="0.00" stop-color="#57212f"/><stop offset="0.17" stop-color="#56212e"/><stop offset="0.33" stop-color="#55212e"/><stop offset="0.50" stop-color="#55202e"/><stop offset="0.67" stop-color="#54202e"/><stop offset="0.83" stop-color="#54202e"/><stop offset="1.00" stop-color="#54202e"/></linearGradient><linearGradient id="g57" x1="0" y1="0" x2="0" y2="1"><stop offset="0.00" stop-color="#682537"/><stop offset="0.17" stop-color="#622334"/><stop offset="0.33" stop-color="#5d2232"/><stop offset="0.50" stop-color="#5a2130"/><stop offset="0.67" stop-color="#57212f"/><stop offset="0.83" stop-color="#56212e"/><stop offset="1.00" stop-color="#55212e"/></linearGradient><linearGradient id="g58" x1="0" y1="0" x2="0" y2="1"><stop offset="0.00" stop-color="#602233"/><stop offset="0.17" stop-color="#5d2231"/><stop offset="0.33" stop-color="#5a2130"/><stop offset="0.50" stop-color="#592130"/><stop offset="0.67" stop-color="#57212f"/><stop offset="0.83" stop-color="#56212f"/><stop offset="1.00" stop-color="#56212f"/></linearGradient><linearGradient id="g59" x1="0" y1="0" x2="0" y2="1"><stop offset="0.00" stop-color="#4c1f2a"/><stop offset="0.17" stop-color="#4f202b"/><stop offset="0.33" stop-color="#52202d"/><stop offset="0.50" stop-color="#54202e"/><stop offset="0.67" stop-color="#56212e"/><stop offset="0.83" stop-color="#57212f"/><stop offset="1.00" stop-color="#57212f"/></linearGradient><linearGradient id="g60" x1="0" y1="0" x2="0" y2="1"><stop offset="0.00" stop-color="#471e28"/><stop offset="0.17" stop-color="#4d1f2a"/><stop offset="0.33" stop-color="#51202c"/><stop offset="0.50" stop-color="#54202e"/><stop offset="0.67" stop-color="#57212f"/><stop offset="0.83" stop-color="#58212f"/><stop offset="1.00" stop-color="#582130"/></linearGradient><linearGradient id="g61" x1="0" y1="0" x2="0" y2="1"><stop offset="0.00" stop-color="#592130"/><stop offset="0.17" stop-color="#592130"/><stop offset="0.33" stop-color="#592130"/><stop offset="0.50" stop-color="#592130"/><stop offset="0.67" stop-color="#592130"/><stop offset="0.83" stop-color="#5a2130"/><stop offset="1.00" stop-color="#5a2130"/></linearGradient><linearGradient id="g62" x1="0" y1="0" x2="0" y2="1"><stop offset="0.00" stop-color="#6d273a"/><stop offset="0.17" stop-color="#672537"/><stop offset="0.33" stop-color="#632334"/><stop offset="0.50" stop-color="#5f2232"/><stop offset="0.67" stop-color="#5c2231"/><stop offset="0.83" stop-color="#5b2231"/><stop offset="1.00" stop-color="#5b2130"/></linearGradient><linearGradient id="g63" x1="0" y1="0" x2="0" y2="1"><stop offset="0.00" stop-color="#682537"/><stop offset="0.17" stop-color="#642435"/><stop offset="0.33" stop-color="#612334"/><stop offset="0.50" stop-color="#5f2232"/><stop offset="0.67" stop-color="#5d2232"/><stop offset="0.83" stop-color="#5c2231"/><stop offset="1.00" stop-color="#5c2231"/></linearGradient><linearGradient id="g64" x1="0" y1="0" x2="0" y2="1"><stop offset="0.00" stop-color="#54202d"/><stop offset="0.17" stop-color="#56212f"/><stop offset="0.33" stop-color="#592130"/><stop offset="0.50" stop-color="#5a2130"/><stop offset="0.67" stop-color="#5c2231"/><stop offset="0.83" stop-color="#5d2231"/><stop offset="1.00" stop-color="#5d2231"/></linearGradient><linearGradient id="g65" x1="0" y1="0" x2="0" y2="1"><stop offset="0.00" stop-color="#4c1f2a"/><stop offset="0.17" stop-color="#52202c"/><stop offset="0.33" stop-color="#56212e"/><stop offset="0.50" stop-color="#592130"/><stop offset="0.67" stop-color="#5c2231"/><stop offset="0.83" stop-color="#5d2232"/><stop offset="1.00" stop-color="#5e2232"/></linearGradient><linearGradient id="g66" x1="0" y1="0" x2="0" y2="1"><stop offset="0.00" stop-color="#5c2231"/><stop offset="0.17" stop-color="#5d2232"/><stop offset="0.33" stop-color="#5e2232"/><stop offset="0.50" stop-color="#5e2232"/><stop offset="0.67" stop-color="#5f2232"/><stop offset="0.83" stop-color="#5f2233"/><stop offset="1.00" stop-color="#5f2233"/></linearGradient><linearGradient id="g67" x1="0" y1="0" x2="0" y2="1"><stop offset="0.00" stop-color="#72283c"/><stop offset="0.17" stop-color="#6d2639"/><stop offset="0.33" stop-color="#682537"/><stop offset="0.50" stop-color="#652435"/><stop offset="0.67" stop-color="#622334"/><stop offset="0.83" stop-color="#612333"/><stop offset="1.00" stop-color="#602333"/></linearGradient><linearGradient id="g68" x1="0" y1="0" x2="0" y2="1"><stop offset="0.00" stop-color="#70283b"/><stop offset="0.17" stop-color="#6c2639"/><stop offset="0.33" stop-color="#682537"/><stop offset="0.50" stop-color="#652436"/><stop offset="0.67" stop-color="#632435"/><stop offset="0.83" stop-color="#622334"/><stop offset="1.00" stop-color="#622334"/></linearGradient><linearGradient id="g69" x1="0" y1="0" x2="0" y2="1"><stop offset="0.00" stop-color="#5c2231"/><stop offset="0.17" stop-color="#5e2232"/><stop offset="0.33" stop-color="#5f2233"/><stop offset="0.50" stop-color="#612333"/><stop offset="0.67" stop-color="#622334"/><stop offset="0.83" stop-color="#632334"/><stop offset="1.00" stop-color="#632334"/></linearGradient><linearGradient id="g70" x1="0" y1="0" x2="0" y2="1"><stop offset="0.00" stop-color="#51202c"/><stop offset="0.17" stop-color="#57212f"/><stop offset="0.33" stop-color="#5b2231"/><stop offset="0.50" stop-color="#5f2232"/><stop offset="0.67" stop-color="#622334"/><stop offset="0.83" stop-color="#632435"/><stop offset="1.00" stop-color="#642435"/></linearGradient><linearGradient id="g71" x1="0" y1="0" x2="0" y2="1"><stop offset="0.00" stop-color="#5f2233"/><stop offset="0.17" stop-color="#612334"/><stop offset="0.33" stop-color="#632334"/><stop offset="0.50" stop-color="#642435"/><stop offset="0.67" stop-color="#652435"/><stop offset="0.83" stop-color="#652436"/><stop offset="1.00" stop-color="#652436"/></linearGradient><linearGradient id="g72" x1="0" y1="0" x2="0" y2="1"><stop offset="0.00" stop-color="#75293d"/><stop offset="0.17" stop-color="#71283c"/><stop offset="0.33" stop-color="#6d273a"/><stop offset="0.50" stop-color="#6a2638"/><stop offset="0.67" stop-color="#682537"/><stop offset="0.83" stop-color="#672536"/><stop offset="1.00" stop-color="#662536"/></linearGradient><linearGradient id="g73" x1="0" y1="0" x2="0" y2="1"><stop offset="0.00" stop-color="#76293e"/><stop offset="0.17" stop-color="#73283c"/><stop offset="0.33" stop-color="#6f273b"/><stop offset="0.50" stop-color="#6c2639"/><stop offset="0.67" stop-color="#692538"/><stop offset="0.83" stop-color="#682537"/><stop offset="1.00" stop-color="#682537"/></linearGradient><linearGradient id="g74" x1="0" y1="0" x2="0" y2="1"><stop offset="0.00" stop-color="#642435"/><stop offset="0.17" stop-color="#662436"/><stop offset="0.33" stop-color="#672536"/><stop offset="0.50" stop-color="#682537"/><stop offset="0.67" stop-color="#682537"/><stop offset="0.83" stop-color="#692537"/><stop offset="1.00" stop-color="#692537"/></linearGradient><linearGradient id="g75" x1="0" y1="0" x2="0" y2="1"><stop offset="0.00" stop-color="#57212f"/><stop offset="0.17" stop-color="#5c2231"/><stop offset="0.33" stop-color="#612334"/><stop offset="0.50" stop-color="#652436"/><stop offset="0.67" stop-color="#682537"/><stop offset="0.83" stop-color="#6a2538"/><stop offset="1.00" stop-color="#6a2638"/></linearGradient><linearGradient id="g76" x1="0" y1="0" x2="0" y2="1"><stop offset="0.00" stop-color="#622334"/><stop offset="0.17" stop-color="#652436"/><stop offset="0.33" stop-color="#672537"/><stop offset="0.50" stop-color="#692538"/><stop offset="0.67" stop-color="#6a2638"/><stop offset="0.83" stop-color="#6b2639"/><stop offset="1.00" stop-color="#6b2639"/></linearGradient><linearGradient id="g77" x1="0" y1="0" x2="0" y2="1"><stop offset="0.00" stop-color="#772a3f"/><stop offset="0.17" stop-color="#74293d"/><stop offset="0.33" stop-color="#72283c"/><stop offset="0.50" stop-color="#70273b"/><stop offset="0.67" stop-color="#6e273a"/><stop offset="0.83" stop-color="#6d2639"/><stop offset="1.00" stop-color="#6d2639"/></linearGradient><linearGradient id="g78" x1="0" y1="0" x2="0" y2="1"><stop offset="0.00" stop-color="#7a2b40"/><stop offset="0.17" stop-color="#772a3f"/><stop offset="0.33" stop-color="#74293d"/><stop offset="0.50" stop-color="#72283c"/><stop offset="0.67" stop-color="#70273b"/><stop offset="0.83" stop-color="#6e273a"/><stop offset="1.00" stop-color="#6e273a"/></linearGradient><linearGradient id="g79" x1="0" y1="0" x2="0" y2="1"><stop offset="0.00" stop-color="#6d273a"/><stop offset="0.17" stop-color="#6e273a"/><stop offset="0.33" stop-color="#6e273a"/><stop offset="0.50" stop-color="#6f273a"/><stop offset="0.67" stop-color="#6f273a"/><stop offset="0.83" stop-color="#6f273a"/><stop offset="1.00" stop-color="#6f273a"/></linearGradient><linearGradient id="g80" x1="0" y1="0" x2="0" y2="1"><stop offset="0.00" stop-color="#5d2232"/><stop offset="0.17" stop-color="#632334"/><stop offset="0.33" stop-color="#682537"/><stop offset="0.50" stop-color="#6b2639"/><stop offset="0.67" stop-color="#6e273a"/><stop offset="0.83" stop-color="#70273b"/><stop offset="1.00" stop-color="#70273b"/></linearGradient><linearGradient id="g81" x1="0" y1="0" x2="0" y2="1"><stop offset="0.00" stop-color="#662436"/><stop offset="0.17" stop-color="#692538"/><stop offset="0.33" stop-color="#6c2639"/><stop offset="0.50" stop-color="#6f273a"/><stop offset="0.67" stop-color="#70273b"/><stop offset="0.83" stop-color="#71283c"/><stop offset="1.00" stop-color="#71283c"/></linearGradient><linearGradient id="g82" x1="0" y1="0" x2="0" y2="1"><stop offset="0.00" stop-color="#792a40"/><stop offset="0.17" stop-color="#772a3f"/><stop offset="0.33" stop-color="#75293e"/><stop offset="0.50" stop-color="#74293d"/><stop offset="0.67" stop-color="#73283d"/><stop offset="0.83" stop-color="#73283c"/><stop offset="1.00" stop-color="#72283c"/></linearGradient><linearGradient id="g83" x1="0" y1="0" x2="0" y2="1"><stop offset="0.00" stop-color="#7f2c42"/><stop offset="0.17" stop-color="#7b2b41"/><stop offset="0.33" stop-color="#782a3f"/><stop offset="0.50" stop-color="#76293e"/><stop offset="0.67" stop-color="#74293d"/><stop offset="0.83" stop-color="#73283d"/><stop offset="1.00" stop-color="#73283d"/></linearGradient><linearGradient id="g84" x1="0" y1="0" x2="0" y2="1"><stop offset="0.00" stop-color="#75293d"/><stop offset="0.17" stop-color="#74293d"/><stop offset="0.33" stop-color="#74293d"/><stop offset="0.50" stop-color="#74293d"/><stop offset="0.67" stop-color="#74293d"/><stop offset="0.83" stop-color="#74293d"/><stop offset="1.00" stop-color="#74293d"/></linearGradient><linearGradient id="g85" x1="0" y1="0" x2="0" y2="1"><stop offset="0.00" stop-color="#642435"/><stop offset="0.17" stop-color="#6a2538"/><stop offset="0.33" stop-color="#6e273a"/><stop offset="0.50" stop-color="#72283c"/><stop offset="0.67" stop-color="#73283d"/><stop offset="0.83" stop-color="#74293d"/><stop offset="1.00" stop-color="#75293d"/></linearGradient><linearGradient id="g86" x1="0" y1="0" x2="0" y2="1"><stop offset="0.00" stop-color="#6a2538"/><stop offset="0.17" stop-color="#6e273a"/><stop offset="0.33" stop-color="#71283c"/><stop offset="0.50" stop-color="#73283d"/><stop offset="0.67" stop-color="#74293d"/><stop offset="0.83" stop-color="#75293e"/><stop offset="1.00" stop-color="#75293e"/></linearGradient><linearGradient id="g87" x1="0" y1="0" x2="0" y2="1"><stop offset="0.00" stop-color="#7b2b41"/><stop offset="0.17" stop-color="#7a2b40"/><stop offset="0.33" stop-color="#782a3f"/><stop offset="0.50" stop-color="#772a3f"/><stop offset="0.67" stop-color="#772a3e"/><stop offset="0.83" stop-color="#76293e"/><stop offset="1.00" stop-color="#76293e"/></linearGradient><linearGradient id="g88" x1="0" y1="0" x2="0" y2="1"><stop offset="0.00" stop-color="#832f41"/><stop offset="0.17" stop-color="#7f2d42"/><stop offset="0.33" stop-color="#7c2b41"/><stop offset="0.50" stop-color="#7a2b40"/><stop offset="0.67" stop-color="#782a3f"/><stop offset="0.83" stop-color="#772a3f"/><stop offset="1.00" stop-color="#772a3e"/></linearGradient><linearGradient id="g89" x1="0" y1="0" x2="0" y2="1"><stop offset="0.00" stop-color="#7a2b40"/><stop offset="0.17" stop-color="#792a40"/><stop offset="0.33" stop-color="#792a3f"/><stop offset="0.50" stop-color="#782a3f"/><stop offset="0.67" stop-color="#782a3f"/><stop offset="0.83" stop-color="#782a3f"/><stop offset="1.00" stop-color="#772a3f"/></linearGradient><linearGradient id="g90" x1="0" y1="0" x2="0" y2="1"><stop offset="0.00" stop-color="#6c2639"/><stop offset="0.17" stop-color="#71283b"/><stop offset="0.33" stop-color="#74293d"/><stop offset="0.50" stop-color="#76293e"/><stop offset="0.67" stop-color="#772a3f"/><stop offset="0.83" stop-color="#782a3f"/><stop offset="1.00" stop-color="#782a3f"/></linearGradient><linearGradient id="g91" x1="0" y1="0" x2="0" y2="1"><stop offset="0.00" stop-color="#6e273a"/><stop offset="0.17" stop-color="#72283c"/><stop offset="0.33" stop-color="#75293d"/><stop offset="0.50" stop-color="#772a3e"/><stop offset="0.67" stop-color="#782a3f"/><stop offset="0.83" stop-color="#792a3f"/><stop offset="1.00" stop-color="#792a3f"/></linearGradient><linearGradient id="g92" x1="0" y1="0" x2="0" y2="1"><stop offset="0.00" stop-color="#7d2c42"/><stop offset="0.17" stop-color="#7c2b41"/><stop offset="0.33" stop-color="#7b2b41"/><stop offset="0.50" stop-color="#7b2b40"/><stop offset="0.67" stop-color="#7a2b40"/><stop offset="0.83" stop-color="#7a2b40"/><stop offset="1.00" stop-color="#7a2b40"/></linearGradient><linearGradient id="g93" x1="0" y1="0" x2="0" y2="1"><stop offset="0.00" stop-color="#863241"/><stop offset="0.17" stop-color="#832f41"/><stop offset="0.33" stop-color="#802d42"/><stop offset="0.50" stop-color="#7d2c42"/><stop offset="0.67" stop-color="#7c2b41"/><stop offset="0.83" stop-color="#7b2b40"/><stop offset="1.00" stop-color="#7a2b40"/></linearGradient><linearGradient id="g94" x1="0" y1="0" x2="0" y2="1"><stop offset="0.00" stop-color="#802d42"/><stop offset="0.17" stop-color="#7e2c42"/><stop offset="0.33" stop-color="#7d2c42"/><stop offset="0.50" stop-color="#7c2b41"/><stop offset="0.67" stop-color="#7c2b41"/><stop offset="0.83" stop-color="#7b2b41"/><stop offset="1.00" stop-color="#7b2b41"/></linearGradient><linearGradient id="g95" x1="0" y1="0" x2="0" y2="1"><stop offset="0.00" stop-color="#73283c"/><stop offset="0.17" stop-color="#76293e"/><stop offset="0.33" stop-color="#782a3f"/><stop offset="0.50" stop-color="#7a2b40"/><stop offset="0.67" stop-color="#7b2b40"/><stop offset="0.83" stop-color="#7c2b41"/><stop offset="1.00" stop-color="#7c2b41"/></linearGradient><linearGradient id="g96" x1="0" y1="0" x2="0" y2="1"><stop offset="0.00" stop-color="#72283c"/><stop offset="0.17" stop-color="#75293e"/><stop offset="0.33" stop-color="#782a3f"/><stop offset="0.50" stop-color="#7a2b40"/><stop offset="0.67" stop-color="#7b2b41"/><stop offset="0.83" stop-color="#7c2b41"/><stop offset="1.00" stop-color="#7d2c41"/></linearGradient><linearGradient id="g97" x1="0" y1="0" x2="0" y2="1"><stop offset="0.00" stop-color="#7f2d42"/><stop offset="0.17" stop-color="#7f2c42"/><stop offset="0.33" stop-color="#7e2c42"/><stop offset="0.50" stop-color="#7e2c42"/><stop offset="0.67" stop-color="#7e2c42"/><stop offset="0.83" stop-color="#7d2c42"/><stop offset="1.00" stop-color="#7d2c42"/></linearGradient><linearGradient id="g98" x1="0" y1="0" x2="0" y2="1"><stop offset="0.00" stop-color="#8a3440"/><stop offset="0.17" stop-color="#863241"/><stop offset="0.33" stop-color="#833041"/><stop offset="0.50" stop-color="#812e41"/><stop offset="0.67" stop-color="#7f2d42"/><stop offset="0.83" stop-color="#7e2c42"/><stop offset="1.00" stop-color="#7e2c42"/></linearGradient><linearGradient id="g99" x1="0" y1="0" x2="0" y2="1"><stop offset="0.00" stop-color="#853141"/><stop offset="0.17" stop-color="#832f41"/><stop offset="0.33" stop-color="#822e41"/><stop offset="0.50" stop-color="#802e42"/><stop offset="0.67" stop-color="#7f2d42"/><stop offset="0.83" stop-color="#7f2d42"/><stop offset="1.00" stop-color="#7f2d42"/></linearGradient><linearGradient id="g100" x1="0" y1="0" x2="0" y2="1"><stop offset="0.00" stop-color="#782a3f"/><stop offset="0.17" stop-color="#7a2b40"/><stop offset="0.33" stop-color="#7c2b41"/><stop offset="0.50" stop-color="#7e2c42"/><stop offset="0.67" stop-color="#7f2c42"/><stop offset="0.83" stop-color="#7f2d42"/><stop offset="1.00" stop-color="#802d42"/></linearGradient><linearGradient id="g101" x1="0" y1="0" x2="0" y2="1"><stop offset="0.00" stop-color="#75293d"/><stop offset="0.17" stop-color="#782a3f"/><stop offset="0.33" stop-color="#7b2b41"/><stop offset="0.50" stop-color="#7d2c42"/><stop offset="0.67" stop-color="#7f2d42"/><stop offset="0.83" stop-color="#802d42"/><stop offset="1.00" stop-color="#802e42"/></linearGradient><linearGradient id="g102" x1="0" y1="0" x2="0" y2="1"><stop offset="0.00" stop-color="#812e42"/><stop offset="0.17" stop-color="#812e42"/><stop offset="0.33" stop-color="#812e42"/><stop offset="0.50" stop-color="#812e42"/><stop offset="0.67" stop-color="#812e42"/><stop offset="0.83" stop-color="#812e42"/><stop offset="1.00" stop-color="#812e42"/></linearGradient><linearGradient id="g103" x1="0" y1="0" x2="0" y2="1"><stop offset="0.00" stop-color="#90393d"/><stop offset="0.17" stop-color="#8a3440"/><stop offset="0.33" stop-color="#873241"/><stop offset="0.50" stop-color="#853041"/><stop offset="0.67" stop-color="#832f41"/><stop offset="0.83" stop-color="#822f41"/><stop offset="1.00" stop-color="#822e41"/></linearGradient><linearGradient id="g104" x1="0" y1="0" x2="0" y2="1"><stop offset="0.00" stop-color="#8a3440"/><stop offset="0.17" stop-color="#883340"/><stop offset="0.33" stop-color="#863141"/><stop offset="0.50" stop-color="#843041"/><stop offset="0.67" stop-color="#833041"/><stop offset="0.83" stop-color="#832f41"/><stop offset="1.00" stop-color="#822f41"/></linearGradient><linearGradient id="g105" x1="0" y1="0" x2="0" y2="1"><stop offset="0.00" stop-color="#7d2c42"/><stop offset="0.17" stop-color="#7f2d42"/><stop offset="0.33" stop-color="#802e42"/><stop offset="0.50" stop-color="#822e41"/><stop offset="0.67" stop-color="#832f41"/><stop offset="0.83" stop-color="#832f41"/><stop offset="1.00" stop-color="#832f41"/></linearGradient><linearGradient id="g106" x1="0" y1="0" x2="0" y2="1"><stop offset="0.00" stop-color="#782a3f"/><stop offset="0.17" stop-color="#7c2b41"/><stop offset="0.33" stop-color="#7f2c42"/><stop offset="0.50" stop-color="#812e42"/><stop offset="0.67" stop-color="#832f41"/><stop offset="0.83" stop-color="#843041"/><stop offset="1.00" stop-color="#843041"/></linearGradient><linearGradient id="g107" x1="0" y1="0" x2="0" y2="1"><stop offset="0.00" stop-color="#832f41"/><stop offset="0.17" stop-color="#833041"/><stop offset="0.33" stop-color="#843041"/><stop offset="0.50" stop-color="#843041"/><stop offset="0.67" stop-color="#843041"/><stop offset="0.83" stop-color="#853041"/><stop offset="1.00" stop-color="#853041"/></linearGradient><linearGradient id="g108" x1="0" y1="0" x2="0" y2="1"><stop offset="0.00" stop-color="#953d3b"/><stop offset="0.17" stop-color="#8f383e"/><stop offset="0.33" stop-color="#8a3440"/><stop offset="0.50" stop-color="#883340"/><stop offset="0.67" stop-color="#873241"/><stop offset="0.83" stop-color="#863141"/><stop offset="1.00" stop-color="#853141"/></linearGradient><linearGradient id="g109" x1="0" y1="0" x2="0" y2="1"><stop offset="0.00" stop-color="#933c3c"/><stop offset="0.17" stop-color="#8e383e"/><stop offset="0.33" stop-color="#8a3440"/><stop offset="0.50" stop-color="#883340"/><stop offset="0.67" stop-color="#873240"/><stop offset="0.83" stop-color="#863241"/><stop offset="1.00" stop-color="#863141"/></linearGradient><linearGradient id="g110" x1="0" y1="0" x2="0" y2="1"><stop offset="0.00" stop-color="#822f41"/><stop offset="0.17" stop-color="#843041"/><stop offset="0.33" stop-color="#853141"/><stop offset="0.50" stop-color="#863141"/><stop offset="0.67" stop-color="#863241"/><stop offset="0.83" stop-color="#873241"/><stop offset="1.00" stop-color="#873241"/></linearGradient><linearGradient id="g111" x1="0" y1="0" x2="0" y2="1"><stop offset="0.00" stop-color="#7c2b41"/><stop offset="0.17" stop-color="#7f2d42"/><stop offset="0.33" stop-color="#822f41"/><stop offset="0.50" stop-color="#853041"/><stop offset="0.67" stop-color="#863241"/><stop offset="0.83" stop-color="#873240"/><stop offset="1.00" stop-color="#883240"/></linearGradient><linearGradient id="g112" x1="0" y1="0" x2="0" y2="1"><stop offset="0.00" stop-color="#853041"/><stop offset="0.17" stop-color="#863141"/><stop offset="0.33" stop-color="#873241"/><stop offset="0.50" stop-color="#873240"/><stop offset="0.67" stop-color="#883340"/><stop offset="0.83" stop-color="#883340"/><stop offset="1.00" stop-color="#883340"/></linearGradient><linearGradient id="g113" x1="0" y1="0" x2="0" y2="1"><stop offset="0.00" stop-color="#9a4139"/><stop offset="0.17" stop-color="#943d3b"/><stop offset="0.33" stop-color="#90393d"/><stop offset="0.50" stop-color="#8d363f"/><stop offset="0.67" stop-color="#8a3440"/><stop offset="0.83" stop-color="#893440"/><stop offset="1.00" stop-color="#893340"/></linearGradient><linearGradient id="g114" x1="0" y1="0" x2="0" y2="1"><stop offset="0.00" stop-color="#9c4338"/><stop offset="0.17" stop-color="#963e3a"/><stop offset="0.33" stop-color="#923a3c"/><stop offset="0.50" stop-color="#8e373e"/><stop offset="0.67" stop-color="#8c353f"/><stop offset="0.83" stop-color="#8a3440"/><stop offset="1.00" stop-color="#8a3440"/></linearGradient><linearGradient id="g115" x1="0" y1="0" x2="0" y2="1"><stop offset="0.00" stop-color="#883340"/><stop offset="0.17" stop-color="#893340"/><stop offset="0.33" stop-color="#893440"/><stop offset="0.50" stop-color="#8a3440"/><stop offset="0.67" stop-color="#8a3440"/><stop offset="0.83" stop-color="#8b3540"/><stop offset="1.00" stop-color="#8b3540"/></linearGradient><linearGradient id="g116" x1="0" y1="0" x2="0" y2="1"><stop offset="0.00" stop-color="#7f2d42"/><stop offset="0.17" stop-color="#832f41"/><stop offset="0.33" stop-color="#863141"/><stop offset="0.50" stop-color="#883340"/><stop offset="0.67" stop-color="#8a3440"/><stop offset="0.83" stop-color="#8c353f"/><stop offset="1.00" stop-color="#8c363f"/></linearGradient><linearGradient id="g117" x1="0" y1="0" x2="0" y2="1"><stop offset="0.00" stop-color="#873241"/><stop offset="0.17" stop-color="#883340"/><stop offset="0.33" stop-color="#8a3440"/><stop offset="0.50" stop-color="#8b353f"/><stop offset="0.67" stop-color="#8d363f"/><stop offset="0.83" stop-color="#8d373e"/><stop offset="1.00" stop-color="#8e373e"/></linearGradient><linearGradient id="g118" x1="0" y1="0" x2="0" y2="1"><stop offset="0.00" stop-color="#9e4537"/><stop offset="0.17" stop-color="#9a4139"/><stop offset="0.33" stop-color="#963e3b"/><stop offset="0.50" stop-color="#933b3c"/><stop offset="0.67" stop-color="#91393d"/><stop offset="0.83" stop-color="#8f383e"/><stop offset="1.00" stop-color="#8f383e"/></linearGradient><linearGradient id="g119" x1="0" y1="0" x2="0" y2="1"><stop offset="0.00" stop-color="#a44832"/><stop offset="0.17" stop-color="#9e4537"/><stop offset="0.33" stop-color="#994039"/><stop offset="0.50" stop-color="#953d3b"/><stop offset="0.67" stop-color="#933b3c"/><stop offset="0.83" stop-color="#913a3d"/><stop offset="1.00" stop-color="#90393d"/></linearGradient><linearGradient id="g120" x1="0" y1="0" x2="0" y2="1"><stop offset="0.00" stop-color="#90393d"/><stop offset="0.17" stop-color="#90393d"/><stop offset="0.33" stop-color="#913a3d"/><stop offset="0.50" stop-color="#913a3d"/><stop offset="0.67" stop-color="#913a3d"/><stop offset="0.83" stop-color="#923a3d"/><stop offset="1.00" stop-color="#923a3d"/></linearGradient><linearGradient id="g121" x1="0" y1="0" x2="0" y2="1"><stop offset="0.00" stop-color="#833041"/><stop offset="0.17" stop-color="#873241"/><stop offset="0.33" stop-color="#8a3440"/><stop offset="0.50" stop-color="#8e373e"/><stop offset="0.67" stop-color="#91393d"/><stop offset="0.83" stop-color="#923b3c"/><stop offset="1.00" stop-color="#933b3c"/></linearGradient><linearGradient id="g122" x1="0" y1="0" x2="0" y2="1"><stop offset="0.00" stop-color="#893340"/><stop offset="0.17" stop-color="#8c353f"/><stop offset="0.33" stop-color="#8f383e"/><stop offset="0.50" stop-color="#913a3d"/><stop offset="0.67" stop-color="#933b3c"/><stop offset="0.83" stop-color="#943c3b"/><stop offset="1.00" stop-color="#943c3b"/></linearGradient><linearGradient id="g123" x1="0" y1="0" x2="0" y2="1"><stop offset="0.00" stop-color="#a24734"/><stop offset="0.17" stop-color="#9e4537"/><stop offset="0.33" stop-color="#9b4238"/><stop offset="0.50" stop-color="#994039"/><stop offset="0.67" stop-color="#973f3a"/><stop offset="0.83" stop-color="#963e3b"/><stop offset="1.00" stop-color="#963e3b"/></linearGradient><linearGradient id="g124" x1="0" y1="0" x2="0" y2="1"><stop offset="0.00" stop-color="#aa4d2c"/><stop offset="0.17" stop-color="#a54931"/><stop offset="0.33" stop-color="#a04636"/><stop offset="0.50" stop-color="#9c4338"/><stop offset="0.67" stop-color="#994139"/><stop offset="0.83" stop-color="#983f3a"/><stop offset="1.00" stop-color="#973f3a"/></linearGradient><linearGradient id="g125" x1="0" y1="0" x2="0" y2="1"><stop offset="0.00" stop-color="#9a4139"/><stop offset="0.17" stop-color="#9a4139"/><stop offset="0.33" stop-color="#994039"/><stop offset="0.50" stop-color="#994039"/><stop offset="0.67" stop-color="#994039"/><stop offset="0.83" stop-color="#984039"/><stop offset="1.00" stop-color="#984039"/></linearGradient><linearGradient id="g126" x1="0" y1="0" x2="0" y2="1"><stop offset="0.00" stop-color="#883240"/><stop offset="0.17" stop-color="#8c353f"/><stop offset="0.33" stop-color="#913a3d"/><stop offset="0.50" stop-color="#953d3b"/><stop offset="0.67" stop-color="#973f3a"/><stop offset="0.83" stop-color="#994039"/><stop offset="1.00" stop-color="#9a4139"/></linearGradient><linearGradient id="g127" x1="0" y1="0" x2="0" y2="1"><stop offset="0.00" stop-color="#8c353f"/><stop offset="0.17" stop-color="#90393d"/><stop offset="0.33" stop-color="#943c3b"/><stop offset="0.50" stop-color="#973f3a"/><stop offset="0.67" stop-color="#994139"/><stop offset="0.83" stop-color="#9b4238"/><stop offset="1.00" stop-color="#9b4238"/></linearGradient><linearGradient id="g128" x1="0" y1="0" x2="0" y2="1"><stop offset="0.00" stop-color="#a54931"/><stop offset="0.17" stop-color="#a34833"/><stop offset="0.33" stop-color="#a14635"/><stop offset="0.50" stop-color="#9f4537"/><stop offset="0.67" stop-color="#9d4437"/><stop offset="0.83" stop-color="#9d4338"/><stop offset="1.00" stop-color="#9c4338"/></linearGradient><linearGradient id="g129" x1="0" y1="0" x2="0" y2="1"><stop offset="0.00" stop-color="#b05126"/><stop offset="0.17" stop-color="#ab4d2b"/><stop offset="0.33" stop-color="#a64a30"/><stop offset="0.50" stop-color="#a34833"/><stop offset="0.67" stop-color="#a04636"/><stop offset="0.83" stop-color="#9e4537"/><stop offset="1.00" stop-color="#9e4437"/></linearGradient><linearGradient id="g130" x1="0" y1="0" x2="0" y2="1"><stop offset="0.00" stop-color="#a34833"/><stop offset="0.17" stop-color="#a24734"/><stop offset="0.33" stop-color="#a14735"/><stop offset="0.50" stop-color="#a04636"/><stop offset="0.67" stop-color="#a04636"/><stop offset="0.83" stop-color="#9f4536"/><stop offset="1.00" stop-color="#9f4536"/></linearGradient><linearGradient id="g131" x1="0" y1="0" x2="0" y2="1"><stop offset="0.00" stop-color="#8e373e"/><stop offset="0.17" stop-color="#943c3c"/><stop offset="0.33" stop-color="#98403a"/><stop offset="0.50" stop-color="#9c4338"/><stop offset="0.67" stop-color="#9e4537"/><stop offset="0.83" stop-color="#a04636"/><stop offset="1.00" stop-color="#a04636"/></linearGradient><linearGradient id="g132" x1="0" y1="0" x2="0" y2="1"><stop offset="0.00" stop-color="#90393d"/><stop offset="0.17" stop-color="#963d3b"/><stop offset="0.33" stop-color="#9a4139"/><stop offset="0.50" stop-color="#9d4437"/><stop offset="0.67" stop-color="#a04636"/><stop offset="0.83" stop-color="#a14735"/><stop offset="1.00" stop-color="#a14735"/></linearGradient><linearGradient id="g133" x1="0" y1="0" x2="0" y2="1"><stop offset="0.00" stop-color="#a84b2e"/><stop offset="0.17" stop-color="#a64a30"/><stop offset="0.33" stop-color="#a54931"/><stop offset="0.50" stop-color="#a44932"/><stop offset="0.67" stop-color="#a34833"/><stop offset="0.83" stop-color="#a34833"/><stop offset="1.00" stop-color="#a34833"/></linearGradient><linearGradient id="g134" x1="0" y1="0" x2="0" y2="1"><stop offset="0.00" stop-color="#b5541f"/><stop offset="0.17" stop-color="#b05126"/><stop offset="0.33" stop-color="#ac4e2a"/><stop offset="0.50" stop-color="#a84b2e"/><stop offset="0.67" stop-color="#a64a30"/><stop offset="0.83" stop-color="#a44932"/><stop offset="1.00" stop-color="#a44832"/></linearGradient><linearGradient id="g135" x1="0" y1="0" x2="0" y2="1"><stop offset="0.00" stop-color="#ab4e2b"/><stop offset="0.17" stop-color="#a94c2d"/><stop offset="0.33" stop-color="#a84b2e"/><stop offset="0.50" stop-color="#a64a30"/><stop offset="0.67" stop-color="#a54a31"/><stop offset="0.83" stop-color="#a54931"/><stop offset="1.00" stop-color="#a54931"/></linearGradient><linearGradient id="g136" x1="0" y1="0" x2="0" y2="1"><stop offset="0.00" stop-color="#973e3a"/><stop offset="0.17" stop-color="#9c4238"/><stop offset="0.33" stop-color="#a04636"/><stop offset="0.50" stop-color="#a24834"/><stop offset="0.67" stop-color="#a44932"/><stop offset="0.83" stop-color="#a54a31"/><stop offset="1.00" stop-color="#a64a30"/></linearGradient><linearGradient id="g137" x1="0" y1="0" x2="0" y2="1"><stop offset="0.00" stop-color="#953d3b"/><stop offset="0.17" stop-color="#9b4238"/><stop offset="0.33" stop-color="#a04636"/><stop offset="0.50" stop-color="#a34833"/><stop offset="0.67" stop-color="#a54931"/><stop offset="0.83" stop-color="#a64a30"/><stop offset="1.00" stop-color="#a74b2f"/></linearGradient><linearGradient id="g138" x1="0" y1="0" x2="0" y2="1"><stop offset="0.00" stop-color="#ab4d2b"/><stop offset="0.17" stop-color="#aa4d2c"/><stop offset="0.33" stop-color="#a94c2d"/><stop offset="0.50" stop-color="#a94c2d"/><stop offset="0.67" stop-color="#a84c2e"/><stop offset="0.83" stop-color="#a84b2e"/><stop offset="1.00" stop-color="#a84b2e"/></linearGradient><linearGradient id="g139" x1="0" y1="0" x2="0" y2="1"><stop offset="0.00" stop-color="#ba5719"/><stop offset="0.17" stop-color="#b55420"/><stop offset="0.33" stop-color="#b15125"/><stop offset="0.50" stop-color="#ae4f28"/><stop offset="0.67" stop-color="#ab4d2b"/><stop offset="0.83" stop-color="#aa4c2c"/><stop offset="1.00" stop-color="#a94c2d"/></linearGradient><linearGradient id="g140" x1="0" y1="0" x2="0" y2="1"><stop offset="0.00" stop-color="#b35322"/><stop offset="0.17" stop-color="#b15125"/><stop offset="0.33" stop-color="#ae5028"/><stop offset="0.50" stop-color="#ad4e29"/><stop offset="0.67" stop-color="#ab4d2b"/><stop offset="0.83" stop-color="#aa4d2c"/><stop offset="1.00" stop-color="#aa4d2c"/></linearGradient><linearGradient id="g141" x1="0" y1="0" x2="0" y2="1"><stop offset="0.00" stop-color="#a04636"/><stop offset="0.17" stop-color="#a34833"/><stop offset="0.33" stop-color="#a64a30"/><stop offset="0.50" stop-color="#a84c2e"/><stop offset="0.67" stop-color="#aa4d2c"/><stop offset="0.83" stop-color="#ab4d2b"/><stop offset="1.00" stop-color="#ab4e2b"/></linearGradient><linearGradient id="g142" x1="0" y1="0" x2="0" y2="1"><stop offset="0.00" stop-color="#9a4139"/><stop offset="0.17" stop-color="#a14635"/><stop offset="0.33" stop-color="#a54931"/><stop offset="0.50" stop-color="#a84b2e"/><stop offset="0.67" stop-color="#ab4d2b"/><stop offset="0.83" stop-color="#ac4e2a"/><stop offset="1.00" stop-color="#ac4e2a"/></linearGradient><linearGradient id="g143" x1="0" y1="0" x2="0" y2="1"><stop offset="0.00" stop-color="#ad4f29"/><stop offset="0.17" stop-color="#ad4f29"/><stop offset="0.33" stop-color="#ad4f29"/><stop offset="0.50" stop-color="#ad4f29"/><stop offset="0.67" stop-color="#ad4f29"/><stop offset="0.83" stop-color="#ae4f29"/><stop offset="1.00" stop-color="#ae4f29"/></linearGradient><linearGradient id="g144" x1="0" y1="0" x2="0" y2="1"><stop offset="0.00" stop-color="#bd5915"/><stop offset="0.17" stop-color="#ba5719"/><stop offset="0.33" stop-color="#b6541f"/><stop offset="0.50" stop-color="#b35223"/><stop offset="0.67" stop-color="#b05126"/><stop offset="0.83" stop-color="#af5027"/><stop offset="1.00" stop-color="#af5027"/></linearGradient><linearGradient id="g145" x1="0" y1="0" x2="0" y2="1"><stop offset="0.00" stop-color="#ba5718"/><stop offset="0.17" stop-color="#b7551d"/><stop offset="0.33" stop-color="#b55420"/><stop offset="0.50" stop-color="#b35223"/><stop offset="0.67" stop-color="#b15125"/><stop offset="0.83" stop-color="#b05126"/><stop offset="1.00" stop-color="#b05026"/></linearGradient><linearGradient id="g146" x1="0" y1="0" x2="0" y2="1"><stop offset="0.00" stop-color="#a84b2e"/><stop offset="0.17" stop-color="#aa4d2c"/><stop offset="0.33" stop-color="#ad4e29"/><stop offset="0.50" stop-color="#ae5028"/><stop offset="0.67" stop-color="#b05126"/><stop offset="0.83" stop-color="#b15125"/><stop offset="1.00" stop-color="#b15125"/></linearGradient><linearGradient id="g147" x1="0" y1="0" x2="0" y2="1"><stop offset="0.00" stop-color="#a04636"/><stop offset="0.17" stop-color="#a64a30"/><stop offset="0.33" stop-color="#aa4d2c"/><stop offset="0.50" stop-color="#ad4f29"/><stop offset="0.67" stop-color="#b05126"/><stop offset="0.83" stop-color="#b15225"/><stop offset="1.00" stop-color="#b25224"/></linearGradient><linearGradient id="g148" x1="0" y1="0" x2="0" y2="1"><stop offset="0.00" stop-color="#b05126"/><stop offset="0.17" stop-color="#b15125"/><stop offset="0.33" stop-color="#b25224"/><stop offset="0.50" stop-color="#b25224"/><stop offset="0.67" stop-color="#b35223"/><stop offset="0.83" stop-color="#b35323"/><stop offset="1.00" stop-color="#b35323"/></linearGradient><linearGradient id="g149" x1="0" y1="0" x2="0" y2="1"><stop offset="0.00" stop-color="#be5a14"/><stop offset="0.17" stop-color="#bd5915"/><stop offset="0.33" stop-color="#ba5718"/><stop offset="0.50" stop-color="#b8551c"/><stop offset="0.67" stop-color="#b6541f"/><stop offset="0.83" stop-color="#b45321"/><stop offset="1.00" stop-color="#b45321"/></linearGradient><linearGradient id="g150" x1="0" y1="0" x2="0" y2="1"><stop offset="0.00" stop-color="#be5a14"/><stop offset="0.17" stop-color="#bc5816"/><stop offset="0.33" stop-color="#ba5718"/><stop offset="0.50" stop-color="#b8561c"/><stop offset="0.67" stop-color="#b6551e"/><stop offset="0.83" stop-color="#b5541f"/><stop offset="1.00" stop-color="#b55420"/></linearGradient><linearGradient id="g151" x1="0" y1="0" x2="0" y2="1"><stop offset="0.00" stop-color="#b05026"/><stop offset="0.17" stop-color="#b25224"/><stop offset="0.33" stop-color="#b35322"/><stop offset="0.50" stop-color="#b45321"/><stop offset="0.67" stop-color="#b5541f"/><stop offset="0.83" stop-color="#b6541f"/><stop offset="1.00" stop-color="#b6541e"/></linearGradient><linearGradient id="g152" x1="0" y1="0" x2="0" y2="1"><stop offset="0.00" stop-color="#a54a31"/><stop offset="0.17" stop-color="#ab4d2b"/><stop offset="0.33" stop-color="#af5027"/><stop offset="0.50" stop-color="#b35223"/><stop offset="0.67" stop-color="#b55420"/><stop offset="0.83" stop-color="#b7551e"/><stop offset="1.00" stop-color="#b7551d"/></linearGradient><linearGradient id="g153" x1="0" y1="0" x2="0" y2="1"><stop offset="0.00" stop-color="#b35323"/><stop offset="0.17" stop-color="#b55420"/><stop offset="0.33" stop-color="#b6541f"/><stop offset="0.50" stop-color="#b7551d"/><stop offset="0.67" stop-color="#b7551c"/><stop offset="0.83" stop-color="#b8561c"/><stop offset="1.00" stop-color="#b8561c"/></linearGradient><linearGradient id="g154" x1="0" y1="0" x2="0" y2="1"><stop offset="0.00" stop-color="#bf5d17"/><stop offset="0.17" stop-color="#be5a14"/><stop offset="0.33" stop-color="#bd5915"/><stop offset="0.50" stop-color="#bc5816"/><stop offset="0.67" stop-color="#ba5718"/><stop offset="0.83" stop-color="#b9561a"/><stop offset="1.00" stop-color="#b9561a"/></linearGradient><linearGradient id="g155" x1="0" y1="0" x2="0" y2="1"><stop offset="0.00" stop-color="#bf5f18"/><stop offset="0.17" stop-color="#be5b15"/><stop offset="0.33" stop-color="#bd5915"/><stop offset="0.50" stop-color="#bc5816"/><stop offset="0.67" stop-color="#bc5817"/><stop offset="0.83" stop-color="#ba5718"/><stop offset="1.00" stop-color="#ba5719"/></linearGradient><linearGradient id="g156" x1="0" y1="0" x2="0" y2="1"><stop offset="0.00" stop-color="#b7551d"/><stop offset="0.17" stop-color="#b8561b"/><stop offset="0.33" stop-color="#b9561a"/><stop offset="0.50" stop-color="#ba5719"/><stop offset="0.67" stop-color="#bb5718"/><stop offset="0.83" stop-color="#bb5717"/><stop offset="1.00" stop-color="#bb5717"/></linearGradient><linearGradient id="g157" x1="0" y1="0" x2="0" y2="1"><stop offset="0.00" stop-color="#ab4d2b"/><stop offset="0.17" stop-color="#b05126"/><stop offset="0.33" stop-color="#b55420"/><stop offset="0.50" stop-color="#b8561c"/><stop offset="0.67" stop-color="#ba5718"/><stop offset="0.83" stop-color="#bc5817"/><stop offset="1.00" stop-color="#bc5816"/></linearGradient><linearGradient id="g158" x1="0" y1="0" x2="0" y2="1"><stop offset="0.00" stop-color="#b6541f"/><stop offset="0.17" stop-color="#b8561c"/><stop offset="0.33" stop-color="#ba5719"/><stop offset="0.50" stop-color="#bb5817"/><stop offset="0.67" stop-color="#bc5816"/><stop offset="0.83" stop-color="#bc5816"/><stop offset="1.00" stop-color="#bc5816"/></linearGradient><linearGradient id="g159" x1="0" y1="0" x2="0" y2="1"><stop offset="0.00" stop-color="#c06119"/><stop offset="0.17" stop-color="#bf5d16"/><stop offset="0.33" stop-color="#be5b14"/><stop offset="0.50" stop-color="#bd5915"/><stop offset="0.67" stop-color="#bd5915"/><stop offset="0.83" stop-color="#bd5915"/><stop offset="1.00" stop-color="#bd5915"/></linearGradient><linearGradient id="g160" x1="0" y1="0" x2="0" y2="1"><stop offset="0.00" stop-color="#c1651c"/><stop offset="0.17" stop-color="#c06119"/><stop offset="0.33" stop-color="#bf5d16"/><stop offset="0.50" stop-color="#be5a14"/><stop offset="0.67" stop-color="#bd5915"/><stop offset="0.83" stop-color="#bd5915"/><stop offset="1.00" stop-color="#bd5915"/></linearGradient><linearGradient id="g161" x1="0" y1="0" x2="0" y2="1"><stop offset="0.00" stop-color="#bd5915"/><stop offset="0.17" stop-color="#bd5915"/><stop offset="0.33" stop-color="#bd5915"/><stop offset="0.50" stop-color="#bd5915"/><stop offset="0.67" stop-color="#bd5915"/><stop offset="0.83" stop-color="#bd5915"/><stop offset="1.00" stop-color="#bd5915"/></linearGradient><linearGradient id="g162" x1="0" y1="0" x2="0" y2="1"><stop offset="0.00" stop-color="#b15125"/><stop offset="0.17" stop-color="#b6541e"/><stop offset="0.33" stop-color="#ba5719"/><stop offset="0.50" stop-color="#bc5816"/><stop offset="0.67" stop-color="#bd5915"/><stop offset="0.83" stop-color="#bd5915"/><stop offset="1.00" stop-color="#be5a14"/></linearGradient><linearGradient id="g163" x1="0" y1="0" x2="0" y2="1"><stop offset="0.00" stop-color="#b9561b"/><stop offset="0.17" stop-color="#bb5817"/><stop offset="0.33" stop-color="#bd5915"/><stop offset="0.50" stop-color="#bd5915"/><stop offset="0.67" stop-color="#be5a14"/><stop offset="0.83" stop-color="#be5a14"/><stop offset="1.00" stop-color="#be5a14"/></linearGradient><linearGradient id="g164" x1="0" y1="0" x2="0" y2="1"><stop offset="0.00" stop-color="#c0641b"/><stop offset="0.17" stop-color="#c06119"/><stop offset="0.33" stop-color="#bf5f17"/><stop offset="0.50" stop-color="#bf5d16"/><stop offset="0.67" stop-color="#be5c15"/><stop offset="0.83" stop-color="#be5b15"/><stop offset="1.00" stop-color="#be5a14"/></linearGradient><linearGradient id="g165" x1="0" y1="0" x2="0" y2="1"><stop offset="0.00" stop-color="#c26b21"/><stop offset="0.17" stop-color="#c1661d"/><stop offset="0.33" stop-color="#c0621a"/><stop offset="0.50" stop-color="#bf5f18"/><stop offset="0.67" stop-color="#bf5d16"/><stop offset="0.83" stop-color="#be5c15"/><stop offset="1.00" stop-color="#be5b15"/></linearGradient><linearGradient id="g166" x1="0" y1="0" x2="0" y2="1"><stop offset="0.00" stop-color="#bf5e17"/><stop offset="0.17" stop-color="#bf5d16"/><stop offset="0.33" stop-color="#bf5d16"/><stop offset="0.50" stop-color="#bf5d16"/><stop offset="0.67" stop-color="#bf5d16"/><stop offset="0.83" stop-color="#bf5c16"/><stop offset="1.00" stop-color="#bf5c16"/></linearGradient><linearGradient id="g167" x1="0" y1="0" x2="0" y2="1"><stop offset="0.00" stop-color="#b7551d"/><stop offset="0.17" stop-color="#bc5816"/><stop offset="0.33" stop-color="#bd5915"/><stop offset="0.50" stop-color="#be5a14"/><stop offset="0.67" stop-color="#be5c15"/><stop offset="0.83" stop-color="#bf5d16"/><stop offset="1.00" stop-color="#bf5d17"/></linearGradient><linearGradient id="g168" x1="0" y1="0" x2="0" y2="1"><stop offset="0.00" stop-color="#bc5816"/><stop offset="0.17" stop-color="#bd5915"/><stop offset="0.33" stop-color="#be5a14"/><stop offset="0.50" stop-color="#be5c15"/><stop offset="0.67" stop-color="#bf5d16"/><stop offset="0.83" stop-color="#bf5e17"/><stop offset="1.00" stop-color="#bf5e17"/></linearGradient><linearGradient id="g169" x1="0" y1="0" x2="0" y2="1"><stop offset="0.00" stop-color="#c1661d"/><stop offset="0.17" stop-color="#c1641c"/><stop offset="0.33" stop-color="#c0631a"/><stop offset="0.50" stop-color="#c06119"/><stop offset="0.67" stop-color="#c06019"/><stop offset="0.83" stop-color="#bf6018"/><stop offset="1.00" stop-color="#bf5f18"/></linearGradient><linearGradient id="g170" x1="0" y1="0" x2="0" y2="1"><stop offset="0.00" stop-color="#c27028"/><stop offset="0.17" stop-color="#c26b22"/><stop offset="0.33" stop-color="#c1671e"/><stop offset="0.50" stop-color="#c1641c"/><stop offset="0.67" stop-color="#c0621a"/><stop offset="0.83" stop-color="#c06119"/><stop offset="1.00" stop-color="#c06019"/></linearGradient><linearGradient id="g171" x1="0" y1="0" x2="0" y2="1"><stop offset="0.00" stop-color="#c1651c"/><stop offset="0.17" stop-color="#c0641b"/><stop offset="0.33" stop-color="#c0631b"/><stop offset="0.50" stop-color="#c0621a"/><stop offset="0.67" stop-color="#c0621a"/><stop offset="0.83" stop-color="#c0611a"/><stop offset="1.00" stop-color="#c06119"/></linearGradient><linearGradient id="g172" x1="0" y1="0" x2="0" y2="1"><stop offset="0.00" stop-color="#bc5816"/><stop offset="0.17" stop-color="#be5a14"/><stop offset="0.33" stop-color="#bf5c16"/><stop offset="0.50" stop-color="#bf5f18"/><stop offset="0.67" stop-color="#c06119"/><stop offset="0.83" stop-color="#c0621a"/><stop offset="1.00" stop-color="#c0621a"/></linearGradient><linearGradient id="g173" x1="0" y1="0" x2="0" y2="1"><stop offset="0.00" stop-color="#bd5915"/><stop offset="0.17" stop-color="#be5a14"/><stop offset="0.33" stop-color="#bf5e17"/><stop offset="0.50" stop-color="#c06019"/><stop offset="0.67" stop-color="#c0621a"/><stop offset="0.83" stop-color="#c0631b"/><stop offset="1.00" stop-color="#c0631b"/></linearGradient><linearGradient id="g174" x1="0" y1="0" x2="0" y2="1"><stop offset="0.00" stop-color="#c2691f"/><stop offset="0.17" stop-color="#c1681e"/><stop offset="0.33" stop-color="#c1661d"/><stop offset="0.50" stop-color="#c1651d"/><stop offset="0.67" stop-color="#c1651c"/><stop offset="0.83" stop-color="#c1641c"/><stop offset="1.00" stop-color="#c1641c"/></linearGradient><linearGradient id="g175" x1="0" y1="0" x2="0" y2="1"><stop offset="0.00" stop-color="#c2752e"/><stop offset="0.17" stop-color="#c27028"/><stop offset="0.33" stop-color="#c26c23"/><stop offset="0.50" stop-color="#c2691f"/><stop offset="0.67" stop-color="#c1671e"/><stop offset="0.83" stop-color="#c1661d"/><stop offset="1.00" stop-color="#c1651c"/></linearGradient><linearGradient id="g176" x1="0" y1="0" x2="0" y2="1"><stop offset="0.00" stop-color="#c26c23"/><stop offset="0.17" stop-color="#c26a20"/><stop offset="0.33" stop-color="#c2691f"/><stop offset="0.50" stop-color="#c1681e"/><stop offset="0.67" stop-color="#c1671e"/><stop offset="0.83" stop-color="#c1661d"/><stop offset="1.00" stop-color="#c1661d"/></linearGradient><linearGradient id="g177" x1="0" y1="0" x2="0" y2="1"><stop offset="0.00" stop-color="#be5b15"/><stop offset="0.17" stop-color="#bf5f18"/><stop offset="0.33" stop-color="#c0621a"/><stop offset="0.50" stop-color="#c1641c"/><stop offset="0.67" stop-color="#c1661d"/><stop offset="0.83" stop-color="#c1671e"/><stop offset="1.00" stop-color="#c1671e"/></linearGradient><linearGradient id="g178" x1="0" y1="0" x2="0" y2="1"><stop offset="0.00" stop-color="#be5a14"/><stop offset="0.17" stop-color="#bf5e17"/><stop offset="0.33" stop-color="#c0621a"/><stop offset="0.50" stop-color="#c1651c"/><stop offset="0.67" stop-color="#c1671d"/><stop offset="0.83" stop-color="#c1681e"/><stop offset="1.00" stop-color="#c2681f"/></linearGradient><linearGradient id="g179" x1="0" y1="0" x2="0" y2="1"><stop offset="0.00" stop-color="#c26c22"/><stop offset="0.17" stop-color="#c26b21"/><stop offset="0.33" stop-color="#c26a20"/><stop offset="0.50" stop-color="#c26a20"/><stop offset="0.67" stop-color="#c26920"/><stop offset="0.83" stop-color="#c2691f"/><stop offset="1.00" stop-color="#c2691f"/></linearGradient><linearGradient id="g180" x1="0" y1="0" x2="0" y2="1"><stop offset="0.00" stop-color="#c27a34"/><stop offset="0.17" stop-color="#c2752e"/><stop offset="0.33" stop-color="#c27129"/><stop offset="0.50" stop-color="#c26e25"/><stop offset="0.67" stop-color="#c26c22"/><stop offset="0.83" stop-color="#c26b21"/><stop offset="1.00" stop-color="#c26a20"/></linearGradient><linearGradient id="g181" x1="0" y1="0" x2="0" y2="1"><stop offset="0.00" stop-color="#c2732c"/><stop offset="0.17" stop-color="#c27128"/><stop offset="0.33" stop-color="#c26f26"/><stop offset="0.50" stop-color="#c26d24"/><stop offset="0.67" stop-color="#c26c22"/><stop offset="0.83" stop-color="#c26b22"/><stop offset="1.00" stop-color="#c26b21"/></linearGradient><linearGradient id="g182" x1="0" y1="0" x2="0" y2="1"><stop offset="0.00" stop-color="#c0621a"/><stop offset="0.17" stop-color="#c1651c"/><stop offset="0.33" stop-color="#c1681e"/><stop offset="0.50" stop-color="#c26a20"/><stop offset="0.67" stop-color="#c26b21"/><stop offset="0.83" stop-color="#c26c22"/><stop offset="1.00" stop-color="#c26c23"/></linearGradient><linearGradient id="g183" x1="0" y1="0" x2="0" y2="1"><stop offset="0.00" stop-color="#bf5e17"/><stop offset="0.17" stop-color="#c0631a"/><stop offset="0.33" stop-color="#c1661d"/><stop offset="0.50" stop-color="#c2691f"/><stop offset="0.67" stop-color="#c26b22"/><stop offset="0.83" stop-color="#c26d23"/><stop offset="1.00" stop-color="#c26d24"/></linearGradient><linearGradient id="g184" x1="0" y1="0" x2="0" y2="1"><stop offset="0.00" stop-color="#c26e25"/><stop offset="0.17" stop-color="#c26e25"/><stop offset="0.33" stop-color="#c26e25"/><stop offset="0.50" stop-color="#c26e25"/><stop offset="0.67" stop-color="#c26e25"/><stop offset="0.83" stop-color="#c26e25"/><stop offset="1.00" stop-color="#c26e25"/></linearGradient><linearGradient id="g185" x1="0" y1="0" x2="0" y2="1"><stop offset="0.00" stop-color="#c37e39"/><stop offset="0.17" stop-color="#c27933"/><stop offset="0.33" stop-color="#c2762f"/><stop offset="0.50" stop-color="#c2732b"/><stop offset="0.67" stop-color="#c27128"/><stop offset="0.83" stop-color="#c26f27"/><stop offset="1.00" stop-color="#c26f26"/></linearGradient><linearGradient id="g186" x1="0" y1="0" x2="0" y2="1"><stop offset="0.00" stop-color="#c27a34"/><stop offset="0.17" stop-color="#c27730"/><stop offset="0.33" stop-color="#c2742d"/><stop offset="0.50" stop-color="#c2722b"/><stop offset="0.67" stop-color="#c27129"/><stop offset="0.83" stop-color="#c27028"/><stop offset="1.00" stop-color="#c27027"/></linearGradient><linearGradient id="g187" x1="0" y1="0" x2="0" y2="1"><stop offset="0.00" stop-color="#c2691f"/><stop offset="0.17" stop-color="#c26b22"/><stop offset="0.33" stop-color="#c26d24"/><stop offset="0.50" stop-color="#c26f26"/><stop offset="0.67" stop-color="#c27028"/><stop offset="0.83" stop-color="#c27128"/><stop offset="1.00" stop-color="#c27129"/></linearGradient><linearGradient id="g188" x1="0" y1="0" x2="0" y2="1"><stop offset="0.00" stop-color="#c0621a"/><stop offset="0.17" stop-color="#c1671e"/><stop offset="0.33" stop-color="#c26b21"/><stop offset="0.50" stop-color="#c26e25"/><stop offset="0.67" stop-color="#c27028"/><stop offset="0.83" stop-color="#c27129"/><stop offset="1.00" stop-color="#c2722a"/></linearGradient><linearGradient id="g189" x1="0" y1="0" x2="0" y2="1"><stop offset="0.00" stop-color="#c27028"/><stop offset="0.17" stop-color="#c27129"/><stop offset="0.33" stop-color="#c2722a"/><stop offset="0.50" stop-color="#c2722a"/><stop offset="0.67" stop-color="#c2732b"/><stop offset="0.83" stop-color="#c2732b"/><stop offset="1.00" stop-color="#c2732b"/></linearGradient><linearGradient id="g190" x1="0" y1="0" x2="0" y2="1"><stop offset="0.00" stop-color="#c3823e"/><stop offset="0.17" stop-color="#c27e39"/><stop offset="0.33" stop-color="#c27a34"/><stop offset="0.50" stop-color="#c27731"/><stop offset="0.67" stop-color="#c2752e"/><stop offset="0.83" stop-color="#c2742d"/><stop offset="1.00" stop-color="#c2742c"/></linearGradient><linearGradient id="g191" x1="0" y1="0" x2="0" y2="1"><stop offset="0.00" stop-color="#c3813c"/><stop offset="0.17" stop-color="#c27d38"/><stop offset="0.33" stop-color="#c27a34"/><stop offset="0.50" stop-color="#c27831"/><stop offset="0.67" stop-color="#c2762f"/><stop offset="0.83" stop-color="#c2752e"/><stop offset="1.00" stop-color="#c2752e"/></linearGradient><linearGradient id="g192" x1="0" y1="0" x2="0" y2="1"><stop offset="0.00" stop-color="#c27027"/><stop offset="0.17" stop-color="#c2722a"/><stop offset="0.33" stop-color="#c2732b"/><stop offset="0.50" stop-color="#c2742d"/><stop offset="0.67" stop-color="#c2752e"/><stop offset="0.83" stop-color="#c2762f"/><stop offset="1.00" stop-color="#c2762f"/></linearGradient><linearGradient id="g193" x1="0" y1="0" x2="0" y2="1"><stop offset="0.00" stop-color="#c1671e"/><stop offset="0.17" stop-color="#c26c22"/><stop offset="0.33" stop-color="#c27027"/><stop offset="0.50" stop-color="#c2732b"/><stop offset="0.67" stop-color="#c2752e"/><stop offset="0.83" stop-color="#c2762f"/><stop offset="1.00" stop-color="#c27730"/></linearGradient><linearGradient id="g194" x1="0" y1="0" x2="0" y2="1"><stop offset="0.00" stop-color="#c2732b"/><stop offset="0.17" stop-color="#c2742d"/><stop offset="0.33" stop-color="#c2762f"/><stop offset="0.50" stop-color="#c27730"/><stop offset="0.67" stop-color="#c27731"/><stop offset="0.83" stop-color="#c27831"/><stop offset="1.00" stop-color="#c27831"/></linearGradient><linearGradient id="g195" x1="0" y1="0" x2="0" y2="1"><stop offset="0.00" stop-color="#c38542"/><stop offset="0.17" stop-color="#c3823d"/><stop offset="0.33" stop-color="#c37e39"/><stop offset="0.50" stop-color="#c27c36"/><stop offset="0.67" stop-color="#c27a34"/><stop offset="0.83" stop-color="#c27933"/><stop offset="1.00" stop-color="#c27932"/></linearGradient><linearGradient id="g196" x1="0" y1="0" x2="0" y2="1"><stop offset="0.00" stop-color="#c48744"/><stop offset="0.17" stop-color="#c3833f"/><stop offset="0.33" stop-color="#c3803b"/><stop offset="0.50" stop-color="#c27d38"/><stop offset="0.67" stop-color="#c27b35"/><stop offset="0.83" stop-color="#c27a34"/><stop offset="1.00" stop-color="#c27a34"/></linearGradient><linearGradient id="g197" x1="0" y1="0" x2="0" y2="1"><stop offset="0.00" stop-color="#c27730"/><stop offset="0.17" stop-color="#c27832"/><stop offset="0.33" stop-color="#c27933"/><stop offset="0.50" stop-color="#c27a34"/><stop offset="0.67" stop-color="#c27a34"/><stop offset="0.83" stop-color="#c27b35"/><stop offset="1.00" stop-color="#c27b35"/></linearGradient><linearGradient id="g198" x1="0" y1="0" x2="0" y2="1"><stop offset="0.00" stop-color="#c26c22"/><stop offset="0.17" stop-color="#c27128"/><stop offset="0.33" stop-color="#c2752d"/><stop offset="0.50" stop-color="#c27831"/><stop offset="0.67" stop-color="#c27a34"/><stop offset="0.83" stop-color="#c27b36"/><stop offset="1.00" stop-color="#c27c36"/></linearGradient><linearGradient id="g199" x1="0" y1="0" x2="0" y2="1"><stop offset="0.00" stop-color="#c2762e"/><stop offset="0.17" stop-color="#c27831"/><stop offset="0.33" stop-color="#c27933"/><stop offset="0.50" stop-color="#c27b35"/><stop offset="0.67" stop-color="#c27c36"/><stop offset="0.83" stop-color="#c27c37"/><stop offset="1.00" stop-color="#c27d37"/></linearGradient><linearGradient id="g200" x1="0" y1="0" x2="0" y2="1"><stop offset="0.00" stop-color="#c48946"/><stop offset="0.17" stop-color="#c38542"/><stop offset="0.33" stop-color="#c3833f"/><stop offset="0.50" stop-color="#c3803c"/><stop offset="0.67" stop-color="#c37f3a"/><stop offset="0.83" stop-color="#c27e39"/><stop offset="1.00" stop-color="#c27e39"/></linearGradient><linearGradient id="g201" x1="0" y1="0" x2="0" y2="1"><stop offset="0.00" stop-color="#c48d4c"/><stop offset="0.17" stop-color="#c48946"/><stop offset="0.33" stop-color="#c38542"/><stop offset="0.50" stop-color="#c3823e"/><stop offset="0.67" stop-color="#c3803c"/><stop offset="0.83" stop-color="#c37f3a"/><stop offset="1.00" stop-color="#c37f3a"/></linearGradient><linearGradient id="g202" x1="0" y1="0" x2="0" y2="1"><stop offset="0.00" stop-color="#c37e39"/><stop offset="0.17" stop-color="#c37f3a"/><stop offset="0.33" stop-color="#c37f3a"/><stop offset="0.50" stop-color="#c37f3b"/><stop offset="0.67" stop-color="#c37f3b"/><stop offset="0.83" stop-color="#c3803b"/><stop offset="1.00" stop-color="#c3803b"/></linearGradient><linearGradient id="g203" x1="0" y1="0" x2="0" y2="1"><stop offset="0.00" stop-color="#c27129"/><stop offset="0.17" stop-color="#c2762f"/><stop offset="0.33" stop-color="#c27a34"/><stop offset="0.50" stop-color="#c27d37"/><stop offset="0.67" stop-color="#c37f3a"/><stop offset="0.83" stop-color="#c3803c"/><stop offset="1.00" stop-color="#c3813c"/></linearGradient><linearGradient id="g204" x1="0" y1="0" x2="0" y2="1"><stop offset="0.00" stop-color="#c27832"/><stop offset="0.17" stop-color="#c27b35"/><stop offset="0.33" stop-color="#c27d38"/><stop offset="0.50" stop-color="#c37f3b"/><stop offset="0.67" stop-color="#c3803c"/><stop offset="0.83" stop-color="#c3813d"/><stop offset="1.00" stop-color="#c3823d"/></linearGradient><linearGradient id="g205" x1="0" y1="0" x2="0" y2="1"><stop offset="0.00" stop-color="#c48c4a"/><stop offset="0.17" stop-color="#c48947"/><stop offset="0.33" stop-color="#c48744"/><stop offset="0.50" stop-color="#c38541"/><stop offset="0.67" stop-color="#c38440"/><stop offset="0.83" stop-color="#c3833f"/><stop offset="1.00" stop-color="#c3823f"/></linearGradient><linearGradient id="g206" x1="0" y1="0" x2="0" y2="1"><stop offset="0.00" stop-color="#c59353"/><stop offset="0.17" stop-color="#c58e4d"/><stop offset="0.33" stop-color="#c48a48"/><stop offset="0.50" stop-color="#c48745"/><stop offset="0.67" stop-color="#c38542"/><stop offset="0.83" stop-color="#c38440"/><stop offset="1.00" stop-color="#c38340"/></linearGradient><linearGradient id="g207" x1="0" y1="0" x2="0" y2="1"><stop offset="0.00" stop-color="#c38643"/><stop offset="0.17" stop-color="#c38542"/><stop offset="0.33" stop-color="#c38542"/><stop offset="0.50" stop-color="#c38541"/><stop offset="0.67" stop-color="#c38541"/><stop offset="0.83" stop-color="#c38441"/><stop offset="1.00" stop-color="#c38441"/></linearGradient><linearGradient id="g208" x1="0" y1="0" x2="0" y2="1"><stop offset="0.00" stop-color="#c27730"/><stop offset="0.17" stop-color="#c27b36"/><stop offset="0.33" stop-color="#c37f3a"/><stop offset="0.50" stop-color="#c3823e"/><stop offset="0.67" stop-color="#c38440"/><stop offset="0.83" stop-color="#c38542"/><stop offset="1.00" stop-color="#c38542"/></linearGradient><linearGradient id="g209" x1="0" y1="0" x2="0" y2="1"><stop offset="0.00" stop-color="#c27b36"/><stop offset="0.17" stop-color="#c37f3a"/><stop offset="0.33" stop-color="#c3813d"/><stop offset="0.50" stop-color="#c38440"/><stop offset="0.67" stop-color="#c38542"/><stop offset="0.83" stop-color="#c48643"/><stop offset="1.00" stop-color="#c48643"/></linearGradient><linearGradient id="g210" x1="0" y1="0" x2="0" y2="1"><stop offset="0.00" stop-color="#c58e4e"/><stop offset="0.17" stop-color="#c48c4b"/><stop offset="0.33" stop-color="#c48b49"/><stop offset="0.50" stop-color="#c48947"/><stop offset="0.67" stop-color="#c48846"/><stop offset="0.83" stop-color="#c48845"/><stop offset="1.00" stop-color="#c48745"/></linearGradient><linearGradient id="g211" x1="0" y1="0" x2="0" y2="1"><stop offset="0.00" stop-color="#c6985a"/><stop offset="0.17" stop-color="#c59354"/><stop offset="0.33" stop-color="#c58f4f"/><stop offset="0.50" stop-color="#c48c4b"/><stop offset="0.67" stop-color="#c48a48"/><stop offset="0.83" stop-color="#c48946"/><stop offset="1.00" stop-color="#c48846"/></linearGradient><linearGradient id="g212" x1="0" y1="0" x2="0" y2="1"><stop offset="0.00" stop-color="#c48d4c"/><stop offset="0.17" stop-color="#c48c4a"/><stop offset="0.33" stop-color="#c48b49"/><stop offset="0.50" stop-color="#c48a48"/><stop offset="0.67" stop-color="#c48a48"/><stop offset="0.83" stop-color="#c48947"/><stop offset="1.00" stop-color="#c48947"/></linearGradient><linearGradient id="g213" x1="0" y1="0" x2="0" y2="1"><stop offset="0.00" stop-color="#c27d38"/><stop offset="0.17" stop-color="#c3813d"/><stop offset="0.33" stop-color="#c38441"/><stop offset="0.50" stop-color="#c48744"/><stop offset="0.67" stop-color="#c48947"/><stop offset="0.83" stop-color="#c48a48"/><stop offset="1.00" stop-color="#c48a48"/></linearGradient><linearGradient id="g214" x1="0" y1="0" x2="0" y2="1"><stop offset="0.00" stop-color="#c37f3a"/><stop offset="0.17" stop-color="#c3823f"/><stop offset="0.33" stop-color="#c38643"/><stop offset="0.50" stop-color="#c48846"/><stop offset="0.67" stop-color="#c48a48"/><stop offset="0.83" stop-color="#c48b49"/><stop offset="1.00" stop-color="#c48b4a"/></linearGradient><linearGradient id="g215" x1="0" y1="0" x2="0" y2="1"><stop offset="0.00" stop-color="#c59151"/><stop offset="0.17" stop-color="#c5904f"/><stop offset="0.33" stop-color="#c58e4d"/><stop offset="0.50" stop-color="#c48d4c"/><stop offset="0.67" stop-color="#c48d4b"/><stop offset="0.83" stop-color="#c48c4b"/><stop offset="1.00" stop-color="#c48c4b"/></linearGradient><linearGradient id="g216" x1="0" y1="0" x2="0" y2="1"><stop offset="0.00" stop-color="#c79d60"/><stop offset="0.17" stop-color="#c6985a"/><stop offset="0.33" stop-color="#c59455"/><stop offset="0.50" stop-color="#c59151"/><stop offset="0.67" stop-color="#c58f4e"/><stop offset="0.83" stop-color="#c48e4d"/><stop offset="1.00" stop-color="#c48d4c"/></linearGradient><linearGradient id="g217" x1="0" y1="0" x2="0" y2="1"><stop offset="0.00" stop-color="#c59455"/><stop offset="0.17" stop-color="#c59252"/><stop offset="0.33" stop-color="#c59151"/><stop offset="0.50" stop-color="#c5904f"/><stop offset="0.67" stop-color="#c58f4e"/><stop offset="0.83" stop-color="#c58e4d"/><stop offset="1.00" stop-color="#c58e4d"/></linearGradient><linearGradient id="g218" x1="0" y1="0" x2="0" y2="1"><stop offset="0.00" stop-color="#c38340"/><stop offset="0.17" stop-color="#c48744"/><stop offset="0.33" stop-color="#c48a48"/><stop offset="0.50" stop-color="#c48c4b"/><stop offset="0.67" stop-color="#c48e4d"/><stop offset="0.83" stop-color="#c58f4e"/><stop offset="1.00" stop-color="#c58f4e"/></linearGradient><linearGradient id="g219" x1="0" y1="0" x2="0" y2="1"><stop offset="0.00" stop-color="#c3823e"/><stop offset="0.17" stop-color="#c48643"/><stop offset="0.33" stop-color="#c48a48"/><stop offset="0.50" stop-color="#c48d4b"/><stop offset="0.67" stop-color="#c58f4e"/><stop offset="0.83" stop-color="#c5904f"/><stop offset="1.00" stop-color="#c59050"/></linearGradient><linearGradient id="g220" x1="0" y1="0" x2="0" y2="1"><stop offset="0.00" stop-color="#c59454"/><stop offset="0.17" stop-color="#c59353"/><stop offset="0.33" stop-color="#c59252"/><stop offset="0.50" stop-color="#c59252"/><stop offset="0.67" stop-color="#c59151"/><stop offset="0.83" stop-color="#c59151"/><stop offset="1.00" stop-color="#c59151"/></linearGradient><linearGradient id="g221" x1="0" y1="0" x2="0" y2="1"><stop offset="0.00" stop-color="#c8a166"/><stop offset="0.17" stop-color="#c79d60"/><stop offset="0.33" stop-color="#c6995b"/><stop offset="0.50" stop-color="#c69657"/><stop offset="0.67" stop-color="#c59454"/><stop offset="0.83" stop-color="#c59353"/><stop offset="1.00" stop-color="#c59252"/></linearGradient><linearGradient id="g222" x1="0" y1="0" x2="0" y2="1"><stop offset="0.00" stop-color="#c69b5e"/><stop offset="0.17" stop-color="#c6995a"/><stop offset="0.33" stop-color="#c69758"/><stop offset="0.50" stop-color="#c59556"/><stop offset="0.67" stop-color="#c59454"/><stop offset="0.83" stop-color="#c59354"/><stop offset="1.00" stop-color="#c59353"/></linearGradient><linearGradient id="g223" x1="0" y1="0" x2="0" y2="1"><stop offset="0.00" stop-color="#c48a48"/><stop offset="0.17" stop-color="#c48d4c"/><stop offset="0.33" stop-color="#c5904f"/><stop offset="0.50" stop-color="#c59251"/><stop offset="0.67" stop-color="#c59353"/><stop offset="0.83" stop-color="#c59454"/><stop offset="1.00" stop-color="#c59455"/></linearGradient><linearGradient id="g224" x1="0" y1="0" x2="0" y2="1"><stop offset="0.00" stop-color="#c38643"/><stop offset="0.17" stop-color="#c48b49"/><stop offset="0.33" stop-color="#c58e4d"/><stop offset="0.50" stop-color="#c59151"/><stop offset="0.67" stop-color="#c59354"/><stop offset="0.83" stop-color="#c59555"/><stop offset="1.00" stop-color="#c59556"/></linearGradient><linearGradient id="g225" x1="0" y1="0" x2="0" y2="1"><stop offset="0.00" stop-color="#c69657"/><stop offset="0.17" stop-color="#c69657"/><stop offset="0.33" stop-color="#c69657"/><stop offset="0.50" stop-color="#c69657"/><stop offset="0.67" stop-color="#c69657"/><stop offset="0.83" stop-color="#c69657"/><stop offset="1.00" stop-color="#c69657"/></linearGradient><linearGradient id="g226" x1="0" y1="0" x2="0" y2="1"><stop offset="0.00" stop-color="#caa56b"/><stop offset="0.17" stop-color="#c8a165"/><stop offset="0.33" stop-color="#c79d61"/><stop offset="0.50" stop-color="#c69b5d"/><stop offset="0.67" stop-color="#c6995a"/><stop offset="0.83" stop-color="#c69759"/><stop offset="1.00" stop-color="#c69758"/></linearGradient><linearGradient id="g227" x1="0" y1="0" x2="0" y2="1"><stop offset="0.00" stop-color="#c9a266"/><stop offset="0.17" stop-color="#c89f62"/><stop offset="0.33" stop-color="#c79c5f"/><stop offset="0.50" stop-color="#c69a5d"/><stop offset="0.67" stop-color="#c6995b"/><stop offset="0.83" stop-color="#c6985a"/><stop offset="1.00" stop-color="#c69859"/></linearGradient><linearGradient id="g228" x1="0" y1="0" x2="0" y2="1"><stop offset="0.00" stop-color="#c59150"/><stop offset="0.17" stop-color="#c59354"/><stop offset="0.33" stop-color="#c59556"/><stop offset="0.50" stop-color="#c69758"/><stop offset="0.67" stop-color="#c6985a"/><stop offset="0.83" stop-color="#c6995a"/><stop offset="1.00" stop-color="#c6995b"/></linearGradient><linearGradient id="g229" x1="0" y1="0" x2="0" y2="1"><stop offset="0.00" stop-color="#c48a48"/><stop offset="0.17" stop-color="#c58f4e"/><stop offset="0.33" stop-color="#c59353"/><stop offset="0.50" stop-color="#c59657"/><stop offset="0.67" stop-color="#c6985a"/><stop offset="0.83" stop-color="#c6995b"/><stop offset="1.00" stop-color="#c69a5c"/></linearGradient><linearGradient id="g230" x1="0" y1="0" x2="0" y2="1"><stop offset="0.00" stop-color="#c6985a"/><stop offset="0.17" stop-color="#c6995b"/><stop offset="0.33" stop-color="#c69a5c"/><stop offset="0.50" stop-color="#c69a5c"/><stop offset="0.67" stop-color="#c69b5d"/><stop offset="0.83" stop-color="#c69b5d"/><stop offset="1.00" stop-color="#c69b5d"/></linearGradient><linearGradient id="g231" x1="0" y1="0" x2="0" y2="1"><stop offset="0.00" stop-color="#cba970"/><stop offset="0.17" stop-color="#caa56b"/><stop offset="0.33" stop-color="#c9a266"/><stop offset="0.50" stop-color="#c89f63"/><stop offset="0.67" stop-color="#c79d60"/><stop offset="0.83" stop-color="#c79c5f"/><stop offset="1.00" stop-color="#c79c5e"/></linearGradient><linearGradient id="g232" x1="0" y1="0" x2="0" y2="1"><stop offset="0.00" stop-color="#cba86e"/><stop offset="0.17" stop-color="#c9a46a"/><stop offset="0.33" stop-color="#c9a266"/><stop offset="0.50" stop-color="#c89f63"/><stop offset="0.67" stop-color="#c79e61"/><stop offset="0.83" stop-color="#c79d60"/><stop offset="1.00" stop-color="#c79d60"/></linearGradient><linearGradient id="g233" x1="0" y1="0" x2="0" y2="1"><stop offset="0.00" stop-color="#c69859"/><stop offset="0.17" stop-color="#c69a5c"/><stop offset="0.33" stop-color="#c69b5d"/><stop offset="0.50" stop-color="#c79c5f"/><stop offset="0.67" stop-color="#c79d60"/><stop offset="0.83" stop-color="#c79d61"/><stop offset="1.00" stop-color="#c79e61"/></linearGradient><linearGradient id="g234" x1="0" y1="0" x2="0" y2="1"><stop offset="0.00" stop-color="#c58f4e"/><stop offset="0.17" stop-color="#c59454"/><stop offset="0.33" stop-color="#c69859"/><stop offset="0.50" stop-color="#c69b5d"/><stop offset="0.67" stop-color="#c79d60"/><stop offset="0.83" stop-color="#c79e61"/><stop offset="1.00" stop-color="#c79e62"/></linearGradient><linearGradient id="g235" x1="0" y1="0" x2="0" y2="1"><stop offset="0.00" stop-color="#c69b5d"/><stop offset="0.17" stop-color="#c79c5f"/><stop offset="0.33" stop-color="#c79d61"/><stop offset="0.50" stop-color="#c79e62"/><stop offset="0.67" stop-color="#c89f63"/><stop offset="0.83" stop-color="#c89f63"/><stop offset="1.00" stop-color="#c89f63"/></linearGradient><linearGradient id="g236" x1="0" y1="0" x2="0" y2="1"><stop offset="0.00" stop-color="#cdac75"/><stop offset="0.17" stop-color="#cba96f"/><stop offset="0.33" stop-color="#caa66b"/><stop offset="0.50" stop-color="#c9a368"/><stop offset="0.67" stop-color="#c9a266"/><stop offset="0.83" stop-color="#c8a165"/><stop offset="1.00" stop-color="#c8a064"/></linearGradient><linearGradient id="g237" x1="0" y1="0" x2="0" y2="1"><stop offset="0.00" stop-color="#ceae78"/><stop offset="0.17" stop-color="#ccaa72"/><stop offset="0.33" stop-color="#caa76d"/><stop offset="0.50" stop-color="#c9a46a"/><stop offset="0.67" stop-color="#c9a367"/><stop offset="0.83" stop-color="#c9a266"/><stop offset="1.00" stop-color="#c8a166"/></linearGradient><linearGradient id="g238" x1="0" y1="0" x2="0" y2="1"><stop offset="0.00" stop-color="#c89f62"/><stop offset="0.17" stop-color="#c8a064"/><stop offset="0.33" stop-color="#c8a165"/><stop offset="0.50" stop-color="#c8a166"/><stop offset="0.67" stop-color="#c9a266"/><stop offset="0.83" stop-color="#c9a267"/><stop offset="1.00" stop-color="#c9a267"/></linearGradient><linearGradient id="g239" x1="0" y1="0" x2="0" y2="1"><stop offset="0.00" stop-color="#c59454"/><stop offset="0.17" stop-color="#c6995a"/><stop offset="0.33" stop-color="#c79c5f"/><stop offset="0.50" stop-color="#c89f63"/><stop offset="0.67" stop-color="#c8a166"/><stop offset="0.83" stop-color="#c9a368"/><stop offset="1.00" stop-color="#c9a368"/></linearGradient><linearGradient id="g240" x1="0" y1="0" x2="0" y2="1"><stop offset="0.00" stop-color="#c79d60"/><stop offset="0.17" stop-color="#c89f63"/><stop offset="0.33" stop-color="#c8a165"/><stop offset="0.50" stop-color="#c9a267"/><stop offset="0.67" stop-color="#c9a368"/><stop offset="0.83" stop-color="#c9a469"/><stop offset="1.00" stop-color="#c9a469"/></linearGradient><linearGradient id="g241" x1="0" y1="0" x2="0" y2="1"><stop offset="0.00" stop-color="#ceaf7a"/><stop offset="0.17" stop-color="#cdac75"/><stop offset="0.33" stop-color="#cbaa71"/><stop offset="0.50" stop-color="#caa76e"/><stop offset="0.67" stop-color="#caa66c"/><stop offset="0.83" stop-color="#caa56b"/><stop offset="1.00" stop-color="#caa56b"/></linearGradient><linearGradient id="g242" x1="0" y1="0" x2="0" y2="1"><stop offset="0.00" stop-color="#d1b381"/><stop offset="0.17" stop-color="#ceaf7a"/><stop offset="0.33" stop-color="#cdac75"/><stop offset="0.50" stop-color="#cba970"/><stop offset="0.67" stop-color="#caa76e"/><stop offset="0.83" stop-color="#caa66c"/><stop offset="1.00" stop-color="#caa66c"/></linearGradient><linearGradient id="g243" x1="0" y1="0" x2="0" y2="1"><stop offset="0.00" stop-color="#caa66b"/><stop offset="0.17" stop-color="#caa66c"/><stop offset="0.33" stop-color="#caa66c"/><stop offset="0.50" stop-color="#caa66d"/><stop offset="0.67" stop-color="#caa76d"/><stop offset="0.83" stop-color="#caa76d"/><stop offset="1.00" stop-color="#caa76d"/></linearGradient><linearGradient id="g244" x1="0" y1="0" x2="0" y2="1"><stop offset="0.00" stop-color="#c6995b"/><stop offset="0.17" stop-color="#c79e61"/><stop offset="0.33" stop-color="#c8a166"/><stop offset="0.50" stop-color="#c9a469"/><stop offset="0.67" stop-color="#caa66c"/><stop offset="0.83" stop-color="#caa76e"/><stop offset="1.00" stop-color="#cba86e"/></linearGradient><linearGradient id="g245" x1="0" y1="0" x2="0" y2="1"><stop offset="0.00" stop-color="#c8a064"/><stop offset="0.17" stop-color="#c9a367"/><stop offset="0.33" stop-color="#caa56a"/><stop offset="0.50" stop-color="#caa66d"/><stop offset="0.67" stop-color="#cba86e"/><stop offset="0.83" stop-color="#cba86f"/><stop offset="1.00" stop-color="#cba96f"/></linearGradient><linearGradient id="g246" x1="0" y1="0" x2="0" y2="1"><stop offset="0.00" stop-color="#d0b27f"/><stop offset="0.17" stop-color="#ceaf7a"/><stop offset="0.33" stop-color="#cdad77"/><stop offset="0.50" stop-color="#ccac74"/><stop offset="0.67" stop-color="#ccaa72"/><stop offset="0.83" stop-color="#cbaa71"/><stop offset="1.00" stop-color="#cba971"/></linearGradient><linearGradient id="g247" x1="0" y1="0" x2="0" y2="1"><stop offset="0.00" stop-color="#d4b989"/><stop offset="0.17" stop-color="#d1b482"/><stop offset="0.33" stop-color="#cfb17c"/><stop offset="0.50" stop-color="#ceae78"/><stop offset="0.67" stop-color="#cdac75"/><stop offset="0.83" stop-color="#ccab73"/><stop offset="1.00" stop-color="#ccaa72"/></linearGradient><linearGradient id="g248" x1="0" y1="0" x2="0" y2="1"><stop offset="0.00" stop-color="#cdac75"/><stop offset="0.17" stop-color="#cdac75"/><stop offset="0.33" stop-color="#ccac74"/><stop offset="0.50" stop-color="#ccac74"/><stop offset="0.67" stop-color="#ccab74"/><stop offset="0.83" stop-color="#ccab74"/><stop offset="1.00" stop-color="#ccab74"/></linearGradient><linearGradient id="g249" x1="0" y1="0" x2="0" y2="1"><stop offset="0.00" stop-color="#c89f62"/><stop offset="0.17" stop-color="#c9a368"/><stop offset="0.33" stop-color="#caa66c"/><stop offset="0.50" stop-color="#cba970"/><stop offset="0.67" stop-color="#ccab73"/><stop offset="0.83" stop-color="#cdac75"/><stop offset="1.00" stop-color="#cdac75"/></linearGradient><linearGradient id="g250" x1="0" y1="0" x2="0" y2="1"><stop offset="0.00" stop-color="#c9a368"/><stop offset="0.17" stop-color="#caa66c"/><stop offset="0.33" stop-color="#cba86f"/><stop offset="0.50" stop-color="#ccab72"/><stop offset="0.67" stop-color="#cdac75"/><stop offset="0.83" stop-color="#cdad76"/><stop offset="1.00" stop-color="#cdad77"/></linearGradient><linearGradient id="g251" x1="0" y1="0" x2="0" y2="1"><stop offset="0.00" stop-color="#d1b583"/><stop offset="0.17" stop-color="#d0b37f"/><stop offset="0.33" stop-color="#cfb17d"/><stop offset="0.50" stop-color="#cfb07b"/><stop offset="0.67" stop-color="#ceaf79"/><stop offset="0.83" stop-color="#ceae78"/><stop offset="1.00" stop-color="#ceae78"/></linearGradient><linearGradient id="g252" x1="0" y1="0" x2="0" y2="1"><stop offset="0.00" stop-color="#d7be92"/><stop offset="0.17" stop-color="#d4b98a"/><stop offset="0.33" stop-color="#d2b684"/><stop offset="0.50" stop-color="#d0b37f"/><stop offset="0.67" stop-color="#cfb17c"/><stop offset="0.83" stop-color="#ceaf7a"/><stop offset="1.00" stop-color="#ceaf7a"/></linearGradient><linearGradient id="g253" x1="0" y1="0" x2="0" y2="1"><stop offset="0.00" stop-color="#d0b380"/><stop offset="0.17" stop-color="#d0b27f"/><stop offset="0.33" stop-color="#cfb17d"/><stop offset="0.50" stop-color="#cfb17c"/><stop offset="0.67" stop-color="#cfb07c"/><stop offset="0.83" stop-color="#cfb07b"/><stop offset="1.00" stop-color="#cfb07b"/></linearGradient><linearGradient id="g254" x1="0" y1="0" x2="0" y2="1"><stop offset="0.00" stop-color="#c9a46a"/><stop offset="0.17" stop-color="#cba86f"/><stop offset="0.33" stop-color="#ccab73"/><stop offset="0.50" stop-color="#cdae77"/><stop offset="0.67" stop-color="#ceaf7a"/><stop offset="0.83" stop-color="#cfb07c"/><stop offset="1.00" stop-color="#cfb17c"/></linearGradient><linearGradient id="g255" x1="0" y1="0" x2="0" y2="1"><stop offset="0.00" stop-color="#caa66c"/><stop offset="0.17" stop-color="#cba971"/><stop offset="0.33" stop-color="#cdac75"/><stop offset="0.50" stop-color="#ceaf79"/><stop offset="0.67" stop-color="#cfb07c"/><stop offset="0.83" stop-color="#cfb17d"/><stop offset="1.00" stop-color="#d0b27e"/></linearGradient><linearGradient id="g256" x1="0" y1="0" x2="0" y2="1"><stop offset="0.00" stop-color="#d3b787"/><stop offset="0.17" stop-color="#d2b684"/><stop offset="0.33" stop-color="#d1b583"/><stop offset="0.50" stop-color="#d1b481"/><stop offset="0.67" stop-color="#d0b380"/><stop offset="0.83" stop-color="#d0b380"/><stop offset="1.00" stop-color="#d0b37f"/></linearGradient><linearGradient id="g257" x1="0" y1="0" x2="0" y2="1"><stop offset="0.00" stop-color="#d9c39a"/><stop offset="0.17" stop-color="#d7be92"/><stop offset="0.33" stop-color="#d4ba8c"/><stop offset="0.50" stop-color="#d3b787"/><stop offset="0.67" stop-color="#d1b583"/><stop offset="0.83" stop-color="#d1b481"/><stop offset="1.00" stop-color="#d1b481"/></linearGradient><linearGradient id="g258" x1="0" y1="0" x2="0" y2="1"><stop offset="0.00" stop-color="#d4ba8c"/><stop offset="0.17" stop-color="#d3b889"/><stop offset="0.33" stop-color="#d2b786"/><stop offset="0.50" stop-color="#d2b685"/><stop offset="0.67" stop-color="#d1b583"/><stop offset="0.83" stop-color="#d1b583"/><stop offset="1.00" stop-color="#d1b482"/></linearGradient><linearGradient id="g259" x1="0" y1="0" x2="0" y2="1"><stop offset="0.00" stop-color="#ccaa72"/><stop offset="0.17" stop-color="#cdae77"/><stop offset="0.33" stop-color="#cfb07c"/><stop offset="0.50" stop-color="#d0b37f"/><stop offset="0.67" stop-color="#d1b482"/><stop offset="0.83" stop-color="#d1b583"/><stop offset="1.00" stop-color="#d2b584"/></linearGradient><linearGradient id="g260" x1="0" y1="0" x2="0" y2="1"><stop offset="0.00" stop-color="#cba970"/><stop offset="0.17" stop-color="#cdad77"/><stop offset="0.33" stop-color="#cfb07c"/><stop offset="0.50" stop-color="#d0b380"/><stop offset="0.67" stop-color="#d1b583"/><stop offset="0.83" stop-color="#d2b685"/><stop offset="1.00" stop-color="#d2b685"/></linearGradient><linearGradient id="g261" x1="0" y1="0" x2="0" y2="1"><stop offset="0.00" stop-color="#d4b98b"/><stop offset="0.17" stop-color="#d3b989"/><stop offset="0.33" stop-color="#d3b888"/><stop offset="0.50" stop-color="#d3b888"/><stop offset="0.67" stop-color="#d3b787"/><stop offset="0.83" stop-color="#d3b787"/><stop offset="1.00" stop-color="#d3b787"/></linearGradient><linearGradient id="g262" x1="0" y1="0" x2="0" y2="1"><stop offset="0.00" stop-color="#dcc7a2"/><stop offset="0.17" stop-color="#d9c29a"/><stop offset="0.33" stop-color="#d7bf94"/><stop offset="0.50" stop-color="#d5bc8f"/><stop offset="0.67" stop-color="#d4ba8b"/><stop offset="0.83" stop-color="#d3b989"/><stop offset="1.00" stop-color="#d3b888"/></linearGradient><linearGradient id="g263" x1="0" y1="0" x2="0" y2="1"><stop offset="0.00" stop-color="#d8c197"/><stop offset="0.17" stop-color="#d7be93"/><stop offset="0.33" stop-color="#d6bc90"/><stop offset="0.50" stop-color="#d5bb8d"/><stop offset="0.67" stop-color="#d4ba8b"/><stop offset="0.83" stop-color="#d4b98a"/><stop offset="1.00" stop-color="#d4b98a"/></linearGradient><linearGradient id="g264" x1="0" y1="0" x2="0" y2="1"><stop offset="0.00" stop-color="#cfb07c"/><stop offset="0.17" stop-color="#d0b380"/><stop offset="0.33" stop-color="#d2b684"/><stop offset="0.50" stop-color="#d3b887"/><stop offset="0.67" stop-color="#d4b989"/><stop offset="0.83" stop-color="#d4ba8b"/><stop offset="1.00" stop-color="#d4ba8b"/></linearGradient><linearGradient id="g265" x1="0" y1="0" x2="0" y2="1"><stop offset="0.00" stop-color="#cdad76"/><stop offset="0.17" stop-color="#cfb17d"/><stop offset="0.33" stop-color="#d1b582"/><stop offset="0.50" stop-color="#d3b787"/><stop offset="0.67" stop-color="#d4b98a"/><stop offset="0.83" stop-color="#d4ba8c"/><stop offset="1.00" stop-color="#d5bb8d"/></linearGradient><linearGradient id="g266" x1="0" y1="0" x2="0" y2="1"><stop offset="0.00" stop-color="#d5bc8e"/><stop offset="0.17" stop-color="#d5bc8e"/><stop offset="0.33" stop-color="#d5bc8e"/><stop offset="0.50" stop-color="#d5bc8e"/><stop offset="0.67" stop-color="#d5bc8e"/><stop offset="0.83" stop-color="#d5bc8e"/><stop offset="1.00" stop-color="#d5bc8e"/></linearGradient><linearGradient id="g267" x1="0" y1="0" x2="0" y2="1"><stop offset="0.00" stop-color="#decba9"/><stop offset="0.17" stop-color="#dcc6a1"/><stop offset="0.33" stop-color="#dac39b"/><stop offset="0.50" stop-color="#d8c096"/><stop offset="0.67" stop-color="#d7be93"/><stop offset="0.83" stop-color="#d6bd91"/><stop offset="1.00" stop-color="#d6bd90"/></linearGradient><linearGradient id="g268" x1="0" y1="0" x2="0" y2="1"><stop offset="0.00" stop-color="#dcc7a2"/><stop offset="0.17" stop-color="#dac49d"/><stop offset="0.33" stop-color="#d9c299"/><stop offset="0.50" stop-color="#d8c096"/><stop offset="0.67" stop-color="#d7bf94"/><stop offset="0.83" stop-color="#d7be92"/><stop offset="1.00" stop-color="#d6be92"/></linearGradient><linearGradient id="g269" x1="0" y1="0" x2="0" y2="1"><stop offset="0.00" stop-color="#d2b786"/><stop offset="0.17" stop-color="#d4b98a"/><stop offset="0.33" stop-color="#d5bb8d"/><stop offset="0.50" stop-color="#d6bd90"/><stop offset="0.67" stop-color="#d6be92"/><stop offset="0.83" stop-color="#d7be93"/><stop offset="1.00" stop-color="#d7be93"/></linearGradient><linearGradient id="g270" x1="0" y1="0" x2="0" y2="1"><stop offset="0.00" stop-color="#cfb17c"/><stop offset="0.17" stop-color="#d1b583"/><stop offset="0.33" stop-color="#d4b989"/><stop offset="0.50" stop-color="#d5bc8e"/><stop offset="0.67" stop-color="#d6be92"/><stop offset="0.83" stop-color="#d7bf94"/><stop offset="1.00" stop-color="#d7bf95"/></linearGradient><linearGradient id="g271" x1="0" y1="0" x2="0" y2="1"><stop offset="0.00" stop-color="#d7be92"/><stop offset="0.17" stop-color="#d7bf94"/><stop offset="0.33" stop-color="#d7bf95"/><stop offset="0.50" stop-color="#d8c095"/><stop offset="0.67" stop-color="#d8c096"/><stop offset="0.83" stop-color="#d8c096"/><stop offset="1.00" stop-color="#d8c096"/></linearGradient><linearGradient id="g272" x1="0" y1="0" x2="0" y2="1"><stop offset="0.00" stop-color="#e0cfb0"/><stop offset="0.17" stop-color="#decba9"/><stop offset="0.33" stop-color="#dcc7a2"/><stop offset="0.50" stop-color="#dbc59e"/><stop offset="0.67" stop-color="#d9c39b"/><stop offset="0.83" stop-color="#d9c299"/><stop offset="1.00" stop-color="#d9c198"/></linearGradient><linearGradient id="g273" x1="0" y1="0" x2="0" y2="1"><stop offset="0.00" stop-color="#e0ceae"/><stop offset="0.17" stop-color="#decaa8"/><stop offset="0.33" stop-color="#dcc7a2"/><stop offset="0.50" stop-color="#dbc59e"/><stop offset="0.67" stop-color="#dac39c"/><stop offset="0.83" stop-color="#d9c29a"/><stop offset="1.00" stop-color="#d9c29a"/></linearGradient><linearGradient id="g274" x1="0" y1="0" x2="0" y2="1"><stop offset="0.00" stop-color="#d6bd91"/><stop offset="0.17" stop-color="#d7bf94"/><stop offset="0.33" stop-color="#d8c197"/><stop offset="0.50" stop-color="#d9c299"/><stop offset="0.67" stop-color="#d9c29a"/><stop offset="0.83" stop-color="#dac39b"/><stop offset="1.00" stop-color="#dac39b"/></linearGradient><linearGradient id="g275" x1="0" y1="0" x2="0" y2="1"><stop offset="0.00" stop-color="#d1b583"/><stop offset="0.17" stop-color="#d4ba8b"/><stop offset="0.33" stop-color="#d6bd91"/><stop offset="0.50" stop-color="#d8c096"/><stop offset="0.67" stop-color="#d9c29a"/><stop offset="0.83" stop-color="#dac49c"/><stop offset="1.00" stop-color="#dac49d"/></linearGradient><linearGradient id="g276" x1="0" y1="0" x2="0" y2="1"><stop offset="0.00" stop-color="#d8c097"/><stop offset="0.17" stop-color="#d9c299"/><stop offset="0.33" stop-color="#dac39b"/><stop offset="0.50" stop-color="#dac49c"/><stop offset="0.67" stop-color="#dac49d"/><stop offset="0.83" stop-color="#dbc59e"/><stop offset="1.00" stop-color="#dbc59e"/></linearGradient><linearGradient id="g277" x1="0" y1="0" x2="0" y2="1"><stop offset="0.00" stop-color="#e2d2b7"/><stop offset="0.17" stop-color="#e0cfb0"/><stop offset="0.33" stop-color="#decbaa"/><stop offset="0.50" stop-color="#ddc9a5"/><stop offset="0.67" stop-color="#dcc7a2"/><stop offset="0.83" stop-color="#dbc6a1"/><stop offset="1.00" stop-color="#dbc6a0"/></linearGradient><linearGradient id="g278" x1="0" y1="0" x2="0" y2="1"><stop offset="0.00" stop-color="#e3d4ba"/><stop offset="0.17" stop-color="#e1d0b2"/><stop offset="0.33" stop-color="#dfcdac"/><stop offset="0.50" stop-color="#decaa8"/><stop offset="0.67" stop-color="#ddc8a4"/><stop offset="0.83" stop-color="#dcc7a2"/><stop offset="1.00" stop-color="#dcc7a2"/></linearGradient><linearGradient id="g279" x1="0" y1="0" x2="0" y2="1"><stop offset="0.00" stop-color="#dac49d"/><stop offset="0.17" stop-color="#dbc59f"/><stop offset="0.33" stop-color="#dbc6a0"/><stop offset="0.50" stop-color="#dcc7a2"/><stop offset="0.67" stop-color="#dcc7a3"/><stop offset="0.83" stop-color="#dcc8a3"/><stop offset="1.00" stop-color="#dcc8a3"/></linearGradient><linearGradient id="g280" x1="0" y1="0" x2="0" y2="1"><stop offset="0.00" stop-color="#d4ba8b"/><stop offset="0.17" stop-color="#d7be93"/><stop offset="0.33" stop-color="#d9c299"/><stop offset="0.50" stop-color="#dbc59e"/><stop offset="0.67" stop-color="#dcc7a2"/><stop offset="0.83" stop-color="#ddc8a4"/><stop offset="1.00" stop-color="#ddc9a5"/></linearGradient><linearGradient id="g281" x1="0" y1="0" x2="0" y2="1"><stop offset="0.00" stop-color="#d9c39b"/><stop offset="0.17" stop-color="#dbc59e"/><stop offset="0.33" stop-color="#dcc7a1"/><stop offset="0.50" stop-color="#dcc8a4"/><stop offset="0.67" stop-color="#ddc9a5"/><stop offset="0.83" stop-color="#ddc9a6"/><stop offset="1.00" stop-color="#ddcaa7"/></linearGradient><linearGradient id="g282" x1="0" y1="0" x2="0" y2="1"><stop offset="0.00" stop-color="#e4d6bd"/><stop offset="0.17" stop-color="#e2d2b7"/><stop offset="0.33" stop-color="#e1d0b1"/><stop offset="0.50" stop-color="#e0cdae"/><stop offset="0.67" stop-color="#dfccab"/><stop offset="0.83" stop-color="#decba9"/><stop offset="1.00" stop-color="#decba9"/></linearGradient><linearGradient id="g283" x1="0" y1="0" x2="0" y2="1"><stop offset="0.00" stop-color="#e7dac4"/><stop offset="0.17" stop-color="#e4d6bd"/><stop offset="0.33" stop-color="#e2d2b6"/><stop offset="0.50" stop-color="#e1cfb1"/><stop offset="0.67" stop-color="#dfcdad"/><stop offset="0.83" stop-color="#dfccab"/><stop offset="1.00" stop-color="#dfccaa"/></linearGradient><linearGradient id="g284" x1="0" y1="0" x2="0" y2="1"><stop offset="0.00" stop-color="#decbaa"/><stop offset="0.17" stop-color="#dfccab"/><stop offset="0.33" stop-color="#dfccab"/><stop offset="0.50" stop-color="#dfccac"/><stop offset="0.67" stop-color="#dfccac"/><stop offset="0.83" stop-color="#dfcdac"/><stop offset="1.00" stop-color="#dfcdac"/></linearGradient><linearGradient id="g285" x1="0" y1="0" x2="0" y2="1"><stop offset="0.00" stop-color="#d7bf94"/><stop offset="0.17" stop-color="#dac39b"/><stop offset="0.33" stop-color="#dcc7a1"/><stop offset="0.50" stop-color="#decaa7"/><stop offset="0.67" stop-color="#dfccab"/><stop offset="0.83" stop-color="#dfcdad"/><stop offset="1.00" stop-color="#e0ceae"/></linearGradient><linearGradient id="g286" x1="0" y1="0" x2="0" y2="1"><stop offset="0.00" stop-color="#dbc59f"/><stop offset="0.17" stop-color="#ddc8a4"/><stop offset="0.33" stop-color="#decaa8"/><stop offset="0.50" stop-color="#dfccab"/><stop offset="0.67" stop-color="#e0cdae"/><stop offset="0.83" stop-color="#e0ceaf"/><stop offset="1.00" stop-color="#e0cfb0"/></linearGradient><linearGradient id="g287" x1="0" y1="0" x2="0" y2="1"><stop offset="0.00" stop-color="#e6d8c1"/><stop offset="0.17" stop-color="#e4d6bd"/><stop offset="0.33" stop-color="#e3d4b9"/><stop offset="0.50" stop-color="#e2d2b6"/><stop offset="0.67" stop-color="#e1d1b3"/><stop offset="0.83" stop-color="#e1d0b2"/><stop offset="1.00" stop-color="#e1cfb1"/></linearGradient><linearGradient id="g288" x1="0" y1="0" x2="0" y2="1"><stop offset="0.00" stop-color="#e9decc"/><stop offset="0.17" stop-color="#e7dac5"/><stop offset="0.33" stop-color="#e5d7bf"/><stop offset="0.50" stop-color="#e3d4ba"/><stop offset="0.67" stop-color="#e2d2b6"/><stop offset="0.83" stop-color="#e2d1b4"/><stop offset="1.00" stop-color="#e1d0b3"/></linearGradient><linearGradient id="g289" x1="0" y1="0" x2="0" y2="1"><stop offset="0.00" stop-color="#e3d3b7"/><stop offset="0.17" stop-color="#e2d2b6"/><stop offset="0.33" stop-color="#e2d2b6"/><stop offset="0.50" stop-color="#e2d2b5"/><stop offset="0.67" stop-color="#e2d2b5"/><stop offset="0.83" stop-color="#e2d1b5"/><stop offset="1.00" stop-color="#e2d1b5"/></linearGradient><linearGradient id="g290" x1="0" y1="0" x2="0" y2="1"><stop offset="0.00" stop-color="#dac49d"/><stop offset="0.17" stop-color="#ddc8a4"/><stop offset="0.33" stop-color="#dfccab"/><stop offset="0.50" stop-color="#e0cfb0"/><stop offset="0.67" stop-color="#e2d1b4"/><stop offset="0.83" stop-color="#e2d2b6"/><stop offset="1.00" stop-color="#e2d2b7"/></linearGradient><linearGradient id="g291" x1="0" y1="0" x2="0" y2="1"><stop offset="0.00" stop-color="#ddc8a4"/><stop offset="0.17" stop-color="#dfccaa"/><stop offset="0.33" stop-color="#e0ceb0"/><stop offset="0.50" stop-color="#e1d1b3"/><stop offset="0.67" stop-color="#e2d2b6"/><stop offset="0.83" stop-color="#e3d3b8"/><stop offset="1.00" stop-color="#e3d3b8"/></linearGradient><linearGradient id="g292" x1="0" y1="0" x2="0" y2="1"><stop offset="0.00" stop-color="#e7dbc5"/><stop offset="0.17" stop-color="#e6d9c2"/><stop offset="0.33" stop-color="#e5d7c0"/><stop offset="0.50" stop-color="#e5d6bd"/><stop offset="0.67" stop-color="#e4d5bc"/><stop offset="0.83" stop-color="#e4d5bb"/><stop offset="1.00" stop-color="#e4d4ba"/></linearGradient><linearGradient id="g293" x1="0" y1="0" x2="0" y2="1"><stop offset="0.00" stop-color="#ece3d3"/><stop offset="0.17" stop-color="#eadfcc"/><stop offset="0.33" stop-color="#e8dbc7"/><stop offset="0.50" stop-color="#e6d9c2"/><stop offset="0.67" stop-color="#e5d7bf"/><stop offset="0.83" stop-color="#e4d6bd"/><stop offset="1.00" stop-color="#e4d5bc"/></linearGradient><linearGradient id="g294" x1="0" y1="0" x2="0" y2="1"><stop offset="0.00" stop-color="#e6d9c3"/><stop offset="0.17" stop-color="#e6d9c2"/><stop offset="0.33" stop-color="#e5d8c0"/><stop offset="0.50" stop-color="#e5d7bf"/><stop offset="0.67" stop-color="#e5d7be"/><stop offset="0.83" stop-color="#e5d6be"/><stop offset="1.00" stop-color="#e5d6be"/></linearGradient><linearGradient id="g295" x1="0" y1="0" x2="0" y2="1"><stop offset="0.00" stop-color="#decaa7"/><stop offset="0.17" stop-color="#e0ceaf"/><stop offset="0.33" stop-color="#e2d1b5"/><stop offset="0.50" stop-color="#e3d4b9"/><stop offset="0.67" stop-color="#e4d6bd"/><stop offset="0.83" stop-color="#e5d7bf"/><stop offset="1.00" stop-color="#e5d7bf"/></linearGradient><linearGradient id="g296" x1="0" y1="0" x2="0" y2="1"><stop offset="0.00" stop-color="#dfccaa"/><stop offset="0.17" stop-color="#e1cfb1"/><stop offset="0.33" stop-color="#e3d3b7"/><stop offset="0.50" stop-color="#e4d5bc"/><stop offset="0.67" stop-color="#e5d7bf"/><stop offset="0.83" stop-color="#e5d8c0"/><stop offset="1.00" stop-color="#e6d8c1"/></linearGradient><linearGradient id="g297" x1="0" y1="0" x2="0" y2="1"><stop offset="0.00" stop-color="#e9ddc9"/><stop offset="0.17" stop-color="#e8dcc7"/><stop offset="0.33" stop-color="#e7dbc5"/><stop offset="0.50" stop-color="#e7dac4"/><stop offset="0.67" stop-color="#e6d9c3"/><stop offset="0.83" stop-color="#e6d9c2"/><stop offset="1.00" stop-color="#e6d9c2"/></linearGradient><linearGradient id="g298" x1="0" y1="0" x2="0" y2="1"><stop offset="0.00" stop-color="#eee6da"/><stop offset="0.17" stop-color="#ece3d4"/><stop offset="0.33" stop-color="#eadfce"/><stop offset="0.50" stop-color="#e9ddc9"/><stop offset="0.67" stop-color="#e7dbc6"/><stop offset="0.83" stop-color="#e7dac4"/><stop offset="1.00" stop-color="#e7dac4"/></linearGradient><linearGradient id="g299" x1="0" y1="0" x2="0" y2="1"><stop offset="0.00" stop-color="#eadfce"/><stop offset="0.17" stop-color="#e9decb"/><stop offset="0.33" stop-color="#e8ddc9"/><stop offset="0.50" stop-color="#e8dcc7"/><stop offset="0.67" stop-color="#e7dbc6"/><stop offset="0.83" stop-color="#e7dbc5"/><stop offset="1.00" stop-color="#e7dac5"/></linearGradient><linearGradient id="g300" x1="0" y1="0" x2="0" y2="1"><stop offset="0.00" stop-color="#e1d0b3"/><stop offset="0.17" stop-color="#e3d4b9"/><stop offset="0.33" stop-color="#e5d7bf"/><stop offset="0.50" stop-color="#e6d9c2"/><stop offset="0.67" stop-color="#e7dac5"/><stop offset="0.83" stop-color="#e7dbc6"/><stop offset="1.00" stop-color="#e8dbc6"/></linearGradient><linearGradient id="g301" x1="0" y1="0" x2="0" y2="1"><stop offset="0.00" stop-color="#e1cfb1"/><stop offset="0.17" stop-color="#e3d3b8"/><stop offset="0.33" stop-color="#e5d7bf"/><stop offset="0.50" stop-color="#e6d9c3"/><stop offset="0.67" stop-color="#e7dbc6"/><stop offset="0.83" stop-color="#e8dcc7"/><stop offset="1.00" stop-color="#e8dcc8"/></linearGradient><linearGradient id="g302" x1="0" y1="0" x2="0" y2="1"><stop offset="0.00" stop-color="#eadfcd"/><stop offset="0.17" stop-color="#e9decc"/><stop offset="0.33" stop-color="#e9decb"/><stop offset="0.50" stop-color="#e9ddca"/><stop offset="0.67" stop-color="#e9ddca"/><stop offset="0.83" stop-color="#e9ddc9"/><stop offset="1.00" stop-color="#e9ddc9"/></linearGradient><linearGradient id="g303" x1="0" y1="0" x2="0" y2="1"><stop offset="0.00" stop-color="#f0eae0"/><stop offset="0.17" stop-color="#eee6da"/><stop offset="0.33" stop-color="#ede3d5"/><stop offset="0.50" stop-color="#ebe1d0"/><stop offset="0.67" stop-color="#eadfcd"/><stop offset="0.83" stop-color="#e9decb"/><stop offset="1.00" stop-color="#e9decb"/></linearGradient><linearGradient id="g304" x1="0" y1="0" x2="0" y2="1"><stop offset="0.00" stop-color="#eee5d8"/><stop offset="0.17" stop-color="#ece3d4"/><stop offset="0.33" stop-color="#ebe1d1"/><stop offset="0.50" stop-color="#ebe0cf"/><stop offset="0.67" stop-color="#eadfcd"/><stop offset="0.83" stop-color="#eadfcc"/><stop offset="1.00" stop-color="#eadecc"/></linearGradient><linearGradient id="g305" x1="0" y1="0" x2="0" y2="1"><stop offset="0.00" stop-color="#e5d7bf"/><stop offset="0.17" stop-color="#e6d9c3"/><stop offset="0.33" stop-color="#e8dbc7"/><stop offset="0.50" stop-color="#e9ddca"/><stop offset="0.67" stop-color="#e9decc"/><stop offset="0.83" stop-color="#eadfcd"/><stop offset="1.00" stop-color="#eadfcd"/></linearGradient><linearGradient id="g306" x1="0" y1="0" x2="0" y2="1"><stop offset="0.00" stop-color="#e3d3b8"/><stop offset="0.17" stop-color="#e5d7c0"/><stop offset="0.33" stop-color="#e7dbc5"/><stop offset="0.50" stop-color="#e9ddc9"/><stop offset="0.67" stop-color="#eadfcc"/><stop offset="0.83" stop-color="#eae0ce"/><stop offset="1.00" stop-color="#ebe0cf"/></linearGradient><linearGradient id="g307" x1="0" y1="0" x2="0" y2="1"><stop offset="0.00" stop-color="#ebe1d0"/><stop offset="0.17" stop-color="#ebe1d0"/><stop offset="0.33" stop-color="#ebe1d0"/><stop offset="0.50" stop-color="#ebe1d0"/><stop offset="0.67" stop-color="#ebe1d0"/><stop offset="0.83" stop-color="#ebe1d0"/><stop offset="1.00" stop-color="#ebe1d0"/></linearGradient><linearGradient id="g308" x1="0" y1="0" x2="0" y2="1"><stop offset="0.00" stop-color="#f2ede5"/><stop offset="0.17" stop-color="#f0eadf"/><stop offset="0.33" stop-color="#efe7db"/><stop offset="0.50" stop-color="#ede5d7"/><stop offset="0.67" stop-color="#ece3d4"/><stop offset="0.83" stop-color="#ece2d2"/><stop offset="1.00" stop-color="#ebe2d2"/></linearGradient><linearGradient id="g309" x1="0" y1="0" x2="0" y2="1"><stop offset="0.00" stop-color="#f1eae0"/><stop offset="0.17" stop-color="#efe8dc"/><stop offset="0.33" stop-color="#eee6d9"/><stop offset="0.50" stop-color="#ede4d7"/><stop offset="0.67" stop-color="#ede3d5"/><stop offset="0.83" stop-color="#ece3d3"/><stop offset="1.00" stop-color="#ece2d3"/></linearGradient><linearGradient id="g310" x1="0" y1="0" x2="0" y2="1"><stop offset="0.00" stop-color="#e8dcc9"/><stop offset="0.17" stop-color="#eadfcc"/><stop offset="0.33" stop-color="#ebe0cf"/><stop offset="0.50" stop-color="#ebe1d2"/><stop offset="0.67" stop-color="#ece2d3"/><stop offset="0.83" stop-color="#ece3d4"/><stop offset="1.00" stop-color="#ece3d4"/></linearGradient><linearGradient id="g311" x1="0" y1="0" x2="0" y2="1"><stop offset="0.00" stop-color="#e5d7bf"/><stop offset="0.17" stop-color="#e7dbc6"/><stop offset="0.33" stop-color="#e9decc"/><stop offset="0.50" stop-color="#ebe1d0"/><stop offset="0.67" stop-color="#ece3d3"/><stop offset="0.83" stop-color="#ede4d5"/><stop offset="1.00" stop-color="#ede4d6"/></linearGradient><linearGradient id="g312" x1="0" y1="0" x2="0" y2="1"><stop offset="0.00" stop-color="#ece3d4"/><stop offset="0.17" stop-color="#ede3d5"/><stop offset="0.33" stop-color="#ede4d6"/><stop offset="0.50" stop-color="#ede4d6"/><stop offset="0.67" stop-color="#ede4d7"/><stop offset="0.83" stop-color="#ede5d7"/><stop offset="1.00" stop-color="#ede5d7"/></linearGradient><linearGradient id="g313" x1="0" y1="0" x2="0" y2="1"><stop offset="0.00" stop-color="#f4f0ea"/><stop offset="0.17" stop-color="#f2ede5"/><stop offset="0.33" stop-color="#f1eae0"/><stop offset="0.50" stop-color="#efe8dd"/><stop offset="0.67" stop-color="#eee7da"/><stop offset="0.83" stop-color="#eee6d9"/><stop offset="1.00" stop-color="#eee5d8"/></linearGradient><linearGradient id="g314" x1="0" y1="0" x2="0" y2="1"><stop offset="0.00" stop-color="#f3efe8"/><stop offset="0.17" stop-color="#f2ece4"/><stop offset="0.33" stop-color="#f1eae0"/><stop offset="0.50" stop-color="#f0e8dd"/><stop offset="0.67" stop-color="#efe7db"/><stop offset="0.83" stop-color="#eee6da"/><stop offset="1.00" stop-color="#eee6da"/></linearGradient><linearGradient id="g315" x1="0" y1="0" x2="0" y2="1"><stop offset="0.00" stop-color="#ece2d3"/><stop offset="0.17" stop-color="#ede4d5"/><stop offset="0.33" stop-color="#eee5d7"/><stop offset="0.50" stop-color="#eee6d9"/><stop offset="0.67" stop-color="#eee6da"/><stop offset="0.83" stop-color="#efe7db"/><stop offset="1.00" stop-color="#efe7db"/></linearGradient><linearGradient id="g316" x1="0" y1="0" x2="0" y2="1"><stop offset="0.00" stop-color="#e7dbc6"/><stop offset="0.17" stop-color="#eadfcd"/><stop offset="0.33" stop-color="#ece2d3"/><stop offset="0.50" stop-color="#ede5d7"/><stop offset="0.67" stop-color="#eee6da"/><stop offset="0.83" stop-color="#efe7db"/><stop offset="1.00" stop-color="#efe8dc"/></linearGradient><linearGradient id="g317" x1="0" y1="0" x2="0" y2="1"><stop offset="0.00" stop-color="#ede5d7"/><stop offset="0.17" stop-color="#eee6d9"/><stop offset="0.33" stop-color="#efe7db"/><stop offset="0.50" stop-color="#efe7dc"/><stop offset="0.67" stop-color="#efe8dd"/><stop offset="0.83" stop-color="#efe8dd"/><stop offset="1.00" stop-color="#f0e8dd"/></linearGradient><linearGradient id="g318" x1="0" y1="0" x2="0" y2="1"><stop offset="0.00" stop-color="#f4f0ea"/><stop offset="0.17" stop-color="#f4f0e9"/><stop offset="0.33" stop-color="#f2ede5"/><stop offset="0.50" stop-color="#f1ebe2"/><stop offset="0.67" stop-color="#f1eae0"/><stop offset="0.83" stop-color="#f0e9df"/><stop offset="1.00" stop-color="#f0e9de"/></linearGradient><linearGradient id="g319" x1="0" y1="0" x2="0" y2="1"><stop offset="0.00" stop-color="#f4f0ea"/><stop offset="0.17" stop-color="#f4f0ea"/><stop offset="0.33" stop-color="#f3eee7"/><stop offset="0.50" stop-color="#f2ece4"/><stop offset="0.67" stop-color="#f1ebe1"/><stop offset="0.83" stop-color="#f1eae0"/><stop offset="1.00" stop-color="#f0eae0"/></linearGradient><linearGradient id="g320" x1="0" y1="0" x2="0" y2="1"><stop offset="0.00" stop-color="#efe8dc"/><stop offset="0.17" stop-color="#f0e9de"/><stop offset="0.33" stop-color="#f0e9df"/><stop offset="0.50" stop-color="#f0eae0"/><stop offset="0.67" stop-color="#f1eae0"/><stop offset="0.83" stop-color="#f1eae1"/><stop offset="1.00" stop-color="#f1ebe1"/></linearGradient><linearGradient id="g321" x1="0" y1="0" x2="0" y2="1"><stop offset="0.00" stop-color="#eadfcd"/><stop offset="0.17" stop-color="#ece3d4"/><stop offset="0.33" stop-color="#eee6d9"/><stop offset="0.50" stop-color="#efe8dd"/><stop offset="0.67" stop-color="#f0eae0"/><stop offset="0.83" stop-color="#f1ebe2"/><stop offset="1.00" stop-color="#f1ebe2"/></linearGradient><linearGradient id="g322" x1="0" y1="0" x2="0" y2="1"><stop offset="0.00" stop-color="#efe7da"/><stop offset="0.17" stop-color="#efe8dd"/><stop offset="0.33" stop-color="#f0eadf"/><stop offset="0.50" stop-color="#f1ebe1"/><stop offset="0.67" stop-color="#f1ebe2"/><stop offset="0.83" stop-color="#f2ece3"/><stop offset="1.00" stop-color="#f2ece3"/></linearGradient><linearGradient id="g323" x1="0" y1="0" x2="0" y2="1"><stop offset="0.00" stop-color="#f4f0ea"/><stop offset="0.17" stop-color="#f4f0ea"/><stop offset="0.33" stop-color="#f4f0ea"/><stop offset="0.50" stop-color="#f3efe8"/><stop offset="0.67" stop-color="#f3eee6"/><stop offset="0.83" stop-color="#f2ede5"/><stop offset="1.00" stop-color="#f2ede5"/></linearGradient><linearGradient id="g324" x1="0" y1="0" x2="0" y2="1"><stop offset="0.00" stop-color="#f4f0ea"/><stop offset="0.17" stop-color="#f4f0ea"/><stop offset="0.33" stop-color="#f4f0ea"/><stop offset="0.50" stop-color="#f4f0ea"/><stop offset="0.67" stop-color="#f3efe8"/><stop offset="0.83" stop-color="#f3eee6"/><stop offset="1.00" stop-color="#f3ede6"/></linearGradient><linearGradient id="g325" x1="0" y1="0" x2="0" y2="1"><stop offset="0.00" stop-color="#f2ede5"/><stop offset="0.17" stop-color="#f3eee6"/><stop offset="0.33" stop-color="#f3eee6"/><stop offset="0.50" stop-color="#f3eee7"/><stop offset="0.67" stop-color="#f3eee7"/><stop offset="0.83" stop-color="#f3eee7"/><stop offset="1.00" stop-color="#f3eee7"/></linearGradient><linearGradient id="g326" x1="0" y1="0" x2="0" y2="1"><stop offset="0.00" stop-color="#ede3d5"/><stop offset="0.17" stop-color="#efe7db"/><stop offset="0.33" stop-color="#f0eae0"/><stop offset="0.50" stop-color="#f2ece3"/><stop offset="0.67" stop-color="#f3eee6"/><stop offset="0.83" stop-color="#f3efe8"/><stop offset="1.00" stop-color="#f3efe8"/></linearGradient><linearGradient id="g327" x1="0" y1="0" x2="0" y2="1"><stop offset="0.00" stop-color="#f0e9de"/><stop offset="0.17" stop-color="#f1ebe1"/><stop offset="0.33" stop-color="#f2ede4"/><stop offset="0.50" stop-color="#f3eee7"/><stop offset="0.67" stop-color="#f3efe8"/><stop offset="0.83" stop-color="#f4efe9"/><stop offset="1.00" stop-color="#f4f0e9"/></linearGradient></defs><rect x="0" y="0" width="1.02" height="83" fill="url(#g0)"/><rect x="1" y="0" width="1.02" height="83" fill="url(#g1)"/><rect x="2" y="0" width="1.02" height="83" fill="url(#g2)"/><rect x="3" y="0" width="1.02" height="83" fill="url(#g3)"/><rect x="4" y="0" width="1.02" height="83" fill="url(#g4)"/><rect x="5" y="0" width="1.02" height="83" fill="url(#g5)"/><rect x="6" y="0" width="1.02" height="83" fill="url(#g6)"/><rect x="7" y="0" width="1.02" height="83" fill="url(#g7)"/><rect x="8" y="0" width="1.02" height="83" fill="url(#g8)"/><rect x="9" y="0" width="1.02" height="83" fill="url(#g9)"/><rect x="10" y="0" width="1.02" height="83" fill="url(#g10)"/><rect x="11" y="0" width="1.02" height="83" fill="url(#g11)"/><rect x="12" y="0" width="1.02" height="83" fill="url(#g12)"/><rect x="13" y="0" width="1.02" height="83" fill="url(#g13)"/><rect x="14" y="0" width="1.02" height="83" fill="url(#g14)"/><rect x="15" y="0" width="1.02" height="83" fill="url(#g15)"/><rect x="16" y="0" width="1.02" height="83" fill="url(#g16)"/><rect x="17" y="0" width="1.02" height="83" fill="url(#g17)"/><rect x="18" y="0" width="1.02" height="83" fill="url(#g18)"/><rect x="19" y="0" width="1.02" height="83" fill="url(#g19)"/><rect x="20" y="0" width="1.02" height="83" fill="url(#g20)"/><rect x="21" y="0" width="1.02" height="83" fill="url(#g21)"/><rect x="22" y="0" width="1.02" height="83" fill="url(#g22)"/><rect x="23" y="0" width="1.02" height="83" fill="url(#g23)"/><rect x="24" y="0" width="1.02" height="83" fill="url(#g24)"/><rect x="25" y="0" width="1.02" height="83" fill="url(#g25)"/><rect x="26" y="0" width="1.02" height="83" fill="url(#g26)"/><rect x="27" y="0" width="1.02" height="83" fill="url(#g27)"/><rect x="28" y="0" width="1.02" height="83" fill="url(#g28)"/><rect x="29" y="0" width="1.02" height="83" fill="url(#g29)"/><rect x="30" y="0" width="1.02" height="83" fill="url(#g30)"/><rect x="31" y="0" width="1.02" height="83" fill="url(#g31)"/><rect x="32" y="0" width="1.02" height="83" fill="url(#g32)"/><rect x="33" y="0" width="1.02" height="83" fill="url(#g33)"/><rect x="34" y="0" width="1.02" height="83" fill="url(#g34)"/><rect x="35" y="0" width="1.02" height="83" fill="url(#g35)"/><rect x="36" y="0" width="1.02" height="83" fill="url(#g36)"/><rect x="37" y="0" width="1.02" height="83" fill="url(#g37)"/><rect x="38" y="0" width="1.02" height="83" fill="url(#g38)"/><rect x="39" y="0" width="1.02" height="83" fill="url(#g39)"/><rect x="40" y="0" width="1.02" height="83" fill="url(#g40)"/><rect x="41" y="0" width="1.02" height="83" fill="url(#g41)"/><rect x="42" y="0" width="1.02" height="83" fill="url(#g42)"/><rect x="43" y="0" width="1.02" height="83" fill="url(#g43)"/><rect x="44" y="0" width="1.02" height="83" fill="url(#g44)"/><rect x="45" y="0" width="1.02" height="83" fill="url(#g45)"/><rect x="46" y="0" width="1.02" height="83" fill="url(#g46)"/><rect x="47" y="0" width="1.02" height="83" fill="url(#g47)"/><rect x="48" y="0" width="1.02" height="83" fill="url(#g48)"/><rect x="49" y="0" width="1.02" height="83" fill="url(#g49)"/><rect x="50" y="0" width="1.02" height="83" fill="url(#g50)"/><rect x="51" y="0" width="1.02" height="83" fill="url(#g51)"/><rect x="52" y="0" width="1.02" height="83" fill="url(#g52)"/><rect x="53" y="0" width="1.02" height="83" fill="url(#g53)"/><rect x="54" y="0" width="1.02" height="83" fill="url(#g54)"/><rect x="55" y="0" width="1.02" height="83" fill="url(#g55)"/><rect x="56" y="0" width="1.02" height="83" fill="url(#g56)"/><rect x="57" y="0" width="1.02" height="83" fill="url(#g57)"/><rect x="58" y="0" width="1.02" height="83" fill="url(#g58)"/><rect x="59" y="0" width="1.02" height="83" fill="url(#g59)"/><rect x="60" y="0" width="1.02" height="83" fill="url(#g60)"/><rect x="61" y="0" width="1.02" height="83" fill="url(#g61)"/><rect x="62" y="0" width="1.02" height="83" fill="url(#g62)"/><rect x="63" y="0" width="1.02" height="83" fill="url(#g63)"/><rect x="64" y="0" width="1.02" height="83" fill="url(#g64)"/><rect x="65" y="0" width="1.02" height="83" fill="url(#g65)"/><rect x="66" y="0" width="1.02" height="83" fill="url(#g66)"/><rect x="67" y="0" width="1.02" height="83" fill="url(#g67)"/><rect x="68" y="0" width="1.02" height="83" fill="url(#g68)"/><rect x="69" y="0" width="1.02" height="83" fill="url(#g69)"/><rect x="70" y="0" width="1.02" height="83" fill="url(#g70)"/><rect x="71" y="0" width="1.02" height="83" fill="url(#g71)"/><rect x="72" y="0" width="1.02" height="83" fill="url(#g72)"/><rect x="73" y="0" width="1.02" height="83" fill="url(#g73)"/><rect x="74" y="0" width="1.02" height="83" fill="url(#g74)"/><rect x="75" y="0" width="1.02" height="83" fill="url(#g75)"/><rect x="76" y="0" width="1.02" height="83" fill="url(#g76)"/><rect x="77" y="0" width="1.02" height="83" fill="url(#g77)"/><rect x="78" y="0" width="1.02" height="83" fill="url(#g78)"/><rect x="79" y="0" width="1.02" height="83" fill="url(#g79)"/><rect x="80" y="0" width="1.02" height="83" fill="url(#g80)"/><rect x="81" y="0" width="1.02" height="83" fill="url(#g81)"/><rect x="82" y="0" width="1.02" height="83" fill="url(#g82)"/><rect x="83" y="0" width="1.02" height="83" fill="url(#g83)"/><rect x="84" y="0" width="1.02" height="83" fill="url(#g84)"/><rect x="85" y="0" width="1.02" height="83" fill="url(#g85)"/><rect x="86" y="0" width="1.02" height="83" fill="url(#g86)"/><rect x="87" y="0" width="1.02" height="83" fill="url(#g87)"/><rect x="88" y="0" width="1.02" height="83" fill="url(#g88)"/><rect x="89" y="0" width="1.02" height="83" fill="url(#g89)"/><rect x="90" y="0" width="1.02" height="83" fill="url(#g90)"/><rect x="91" y="0" width="1.02" height="83" fill="url(#g91)"/><rect x="92" y="0" width="1.02" height="83" fill="url(#g92)"/><rect x="93" y="0" width="1.02" height="83" fill="url(#g93)"/><rect x="94" y="0" width="1.02" height="83" fill="url(#g94)"/><rect x="95" y="0" width="1.02" height="83" fill="url(#g95)"/><rect x="96" y="0" width="1.02" height="83" fill="url(#g96)"/><rect x="97" y="0" width="1.02" height="83" fill="url(#g97)"/><rect x="98" y="0" width="1.02" height="83" fill="url(#g98)"/><rect x="99" y="0" width="1.02" height="83" fill="url(#g99)"/><rect x="100" y="0" width="1.02" height="83" fill="url(#g100)"/><rect x="101" y="0" width="1.02" height="83" fill="url(#g101)"/><rect x="102" y="0" width="1.02" height="83" fill="url(#g102)"/><rect x="103" y="0" width="1.02" height="83" fill="url(#g103)"/><rect x="104" y="0" width="1.02" height="83" fill="url(#g104)"/><rect x="105" y="0" width="1.02" height="83" fill="url(#g105)"/><rect x="106" y="0" width="1.02" height="83" fill="url(#g106)"/><rect x="107" y="0" width="1.02" height="83" fill="url(#g107)"/><rect x="108" y="0" width="1.02" height="83" fill="url(#g108)"/><rect x="109" y="0" width="1.02" height="83" fill="url(#g109)"/><rect x="110" y="0" width="1.02" height="83" fill="url(#g110)"/><rect x="111" y="0" width="1.02" height="83" fill="url(#g111)"/><rect x="112" y="0" width="1.02" height="83" fill="url(#g112)"/><rect x="113" y="0" width="1.02" height="83" fill="url(#g113)"/><rect x="114" y="0" width="1.02" height="83" fill="url(#g114)"/><rect x="115" y="0" width="1.02" height="83" fill="url(#g115)"/><rect x="116" y="0" width="1.02" height="83" fill="url(#g116)"/><rect x="117" y="0" width="1.02" height="83" fill="url(#g117)"/><rect x="118" y="0" width="1.02" height="83" fill="url(#g118)"/><rect x="119" y="0" width="1.02" height="83" fill="url(#g119)"/><rect x="120" y="0" width="1.02" height="83" fill="url(#g120)"/><rect x="121" y="0" width="1.02" height="83" fill="url(#g121)"/><rect x="122" y="0" width="1.02" height="83" fill="url(#g122)"/><rect x="123" y="0" width="1.02" height="83" fill="url(#g123)"/><rect x="124" y="0" width="1.02" height="83" fill="url(#g124)"/><rect x="125" y="0" width="1.02" height="83" fill="url(#g125)"/><rect x="126" y="0" width="1.02" height="83" fill="url(#g126)"/><rect x="127" y="0" width="1.02" height="83" fill="url(#g127)"/><rect x="128" y="0" width="1.02" height="83" fill="url(#g128)"/><rect x="129" y="0" width="1.02" height="83" fill="url(#g129)"/><rect x="130" y="0" width="1.02" height="83" fill="url(#g130)"/><rect x="131" y="0" width="1.02" height="83" fill="url(#g131)"/><rect x="132" y="0" width="1.02" height="83" fill="url(#g132)"/><rect x="133" y="0" width="1.02" height="83" fill="url(#g133)"/><rect x="134" y="0" width="1.02" height="83" fill="url(#g134)"/><rect x="135" y="0" width="1.02" height="83" fill="url(#g135)"/><rect x="136" y="0" width="1.02" height="83" fill="url(#g136)"/><rect x="137" y="0" width="1.02" height="83" fill="url(#g137)"/><rect x="138" y="0" width="1.02" height="83" fill="url(#g138)"/><rect x="139" y="0" width="1.02" height="83" fill="url(#g139)"/><rect x="140" y="0" width="1.02" height="83" fill="url(#g140)"/><rect x="141" y="0" width="1.02" height="83" fill="url(#g141)"/><rect x="142" y="0" width="1.02" height="83" fill="url(#g142)"/><rect x="143" y="0" width="1.02" height="83" fill="url(#g143)"/><rect x="144" y="0" width="1.02" height="83" fill="url(#g144)"/><rect x="145" y="0" width="1.02" height="83" fill="url(#g145)"/><rect x="146" y="0" width="1.02" height="83" fill="url(#g146)"/><rect x="147" y="0" width="1.02" height="83" fill="url(#g147)"/><rect x="148" y="0" width="1.02" height="83" fill="url(#g148)"/><rect x="149" y="0" width="1.02" height="83" fill="url(#g149)"/><rect x="150" y="0" width="1.02" height="83" fill="url(#g150)"/><rect x="151" y="0" width="1.02" height="83" fill="url(#g151)"/><rect x="152" y="0" width="1.02" height="83" fill="url(#g152)"/><rect x="153" y="0" width="1.02" height="83" fill="url(#g153)"/><rect x="154" y="0" width="1.02" height="83" fill="url(#g154)"/><rect x="155" y="0" width="1.02" height="83" fill="url(#g155)"/><rect x="156" y="0" width="1.02" height="83" fill="url(#g156)"/><rect x="157" y="0" width="1.02" height="83" fill="url(#g157)"/><rect x="158" y="0" width="1.02" height="83" fill="url(#g158)"/><rect x="159" y="0" width="1.02" height="83" fill="url(#g159)"/><rect x="160" y="0" width="1.02" height="83" fill="url(#g160)"/><rect x="161" y="0" width="1.02" height="83" fill="url(#g161)"/><rect x="162" y="0" width="1.02" height="83" fill="url(#g162)"/><rect x="163" y="0" width="1.02" height="83" fill="url(#g163)"/><rect x="164" y="0" width="1.02" height="83" fill="url(#g164)"/><rect x="165" y="0" width="1.02" height="83" fill="url(#g165)"/><rect x="166" y="0" width="1.02" height="83" fill="url(#g166)"/><rect x="167" y="0" width="1.02" height="83" fill="url(#g167)"/><rect x="168" y="0" width="1.02" height="83" fill="url(#g168)"/><rect x="169" y="0" width="1.02" height="83" fill="url(#g169)"/><rect x="170" y="0" width="1.02" height="83" fill="url(#g170)"/><rect x="171" y="0" width="1.02" height="83" fill="url(#g171)"/><rect x="172" y="0" width="1.02" height="83" fill="url(#g172)"/><rect x="173" y="0" width="1.02" height="83" fill="url(#g173)"/><rect x="174" y="0" width="1.02" height="83" fill="url(#g174)"/><rect x="175" y="0" width="1.02" height="83" fill="url(#g175)"/><rect x="176" y="0" width="1.02" height="83" fill="url(#g176)"/><rect x="177" y="0" width="1.02" height="83" fill="url(#g177)"/><rect x="178" y="0" width="1.02" height="83" fill="url(#g178)"/><rect x="179" y="0" width="1.02" height="83" fill="url(#g179)"/><rect x="180" y="0" width="1.02" height="83" fill="url(#g180)"/><rect x="181" y="0" width="1.02" height="83" fill="url(#g181)"/><rect x="182" y="0" width="1.02" height="83" fill="url(#g182)"/><rect x="183" y="0" width="1.02" height="83" fill="url(#g183)"/><rect x="184" y="0" width="1.02" height="83" fill="url(#g184)"/><rect x="185" y="0" width="1.02" height="83" fill="url(#g185)"/><rect x="186" y="0" width="1.02" height="83" fill="url(#g186)"/><rect x="187" y="0" width="1.02" height="83" fill="url(#g187)"/><rect x="188" y="0" width="1.02" height="83" fill="url(#g188)"/><rect x="189" y="0" width="1.02" height="83" fill="url(#g189)"/><rect x="190" y="0" width="1.02" height="83" fill="url(#g190)"/><rect x="191" y="0" width="1.02" height="83" fill="url(#g191)"/><rect x="192" y="0" width="1.02" height="83" fill="url(#g192)"/><rect x="193" y="0" width="1.02" height="83" fill="url(#g193)"/><rect x="194" y="0" width="1.02" height="83" fill="url(#g194)"/><rect x="195" y="0" width="1.02" height="83" fill="url(#g195)"/><rect x="196" y="0" width="1.02" height="83" fill="url(#g196)"/><rect x="197" y="0" width="1.02" height="83" fill="url(#g197)"/><rect x="198" y="0" width="1.02" height="83" fill="url(#g198)"/><rect x="199" y="0" width="1.02" height="83" fill="url(#g199)"/><rect x="200" y="0" width="1.02" height="83" fill="url(#g200)"/><rect x="201" y="0" width="1.02" height="83" fill="url(#g201)"/><rect x="202" y="0" width="1.02" height="83" fill="url(#g202)"/><rect x="203" y="0" width="1.02" height="83" fill="url(#g203)"/><rect x="204" y="0" width="1.02" height="83" fill="url(#g204)"/><rect x="205" y="0" width="1.02" height="83" fill="url(#g205)"/><rect x="206" y="0" width="1.02" height="83" fill="url(#g206)"/><rect x="207" y="0" width="1.02" height="83" fill="url(#g207)"/><rect x="208" y="0" width="1.02" height="83" fill="url(#g208)"/><rect x="209" y="0" width="1.02" height="83" fill="url(#g209)"/><rect x="210" y="0" width="1.02" height="83" fill="url(#g210)"/><rect x="211" y="0" width="1.02" height="83" fill="url(#g211)"/><rect x="212" y="0" width="1.02" height="83" fill="url(#g212)"/><rect x="213" y="0" width="1.02" height="83" fill="url(#g213)"/><rect x="214" y="0" width="1.02" height="83" fill="url(#g214)"/><rect x="215" y="0" width="1.02" height="83" fill="url(#g215)"/><rect x="216" y="0" width="1.02" height="83" fill="url(#g216)"/><rect x="217" y="0" width="1.02" height="83" fill="url(#g217)"/><rect x="218" y="0" width="1.02" height="83" fill="url(#g218)"/><rect x="219" y="0" width="1.02" height="83" fill="url(#g219)"/><rect x="220" y="0" width="1.02" height="83" fill="url(#g220)"/><rect x="221" y="0" width="1.02" height="83" fill="url(#g221)"/><rect x="222" y="0" width="1.02" height="83" fill="url(#g222)"/><rect x="223" y="0" width="1.02" height="83" fill="url(#g223)"/><rect x="224" y="0" width="1.02" height="83" fill="url(#g224)"/><rect x="225" y="0" width="1.02" height="83" fill="url(#g225)"/><rect x="226" y="0" width="1.02" height="83" fill="url(#g226)"/><rect x="227" y="0" width="1.02" height="83" fill="url(#g227)"/><rect x="228" y="0" width="1.02" height="83" fill="url(#g228)"/><rect x="229" y="0" width="1.02" height="83" fill="url(#g229)"/><rect x="230" y="0" width="1.02" height="83" fill="url(#g230)"/><rect x="231" y="0" width="1.02" height="83" fill="url(#g231)"/><rect x="232" y="0" width="1.02" height="83" fill="url(#g232)"/><rect x="233" y="0" width="1.02" height="83" fill="url(#g233)"/><rect x="234" y="0" width="1.02" height="83" fill="url(#g234)"/><rect x="235" y="0" width="1.02" height="83" fill="url(#g235)"/><rect x="236" y="0" width="1.02" height="83" fill="url(#g236)"/><rect x="237" y="0" width="1.02" height="83" fill="url(#g237)"/><rect x="238" y="0" width="1.02" height="83" fill="url(#g238)"/><rect x="239" y="0" width="1.02" height="83" fill="url(#g239)"/><rect x="240" y="0" width="1.02" height="83" fill="url(#g240)"/><rect x="241" y="0" width="1.02" height="83" fill="url(#g241)"/><rect x="242" y="0" width="1.02" height="83" fill="url(#g242)"/><rect x="243" y="0" width="1.02" height="83" fill="url(#g243)"/><rect x="244" y="0" width="1.02" height="83" fill="url(#g244)"/><rect x="245" y="0" width="1.02" height="83" fill="url(#g245)"/><rect x="246" y="0" width="1.02" height="83" fill="url(#g246)"/><rect x="247" y="0" width="1.02" height="83" fill="url(#g247)"/><rect x="248" y="0" width="1.02" height="83" fill="url(#g248)"/><rect x="249" y="0" width="1.02" height="83" fill="url(#g249)"/><rect x="250" y="0" width="1.02" height="83" fill="url(#g250)"/><rect x="251" y="0" width="1.02" height="83" fill="url(#g251)"/><rect x="252" y="0" width="1.02" height="83" fill="url(#g252)"/><rect x="253" y="0" width="1.02" height="83" fill="url(#g253)"/><rect x="254" y="0" width="1.02" height="83" fill="url(#g254)"/><rect x="255" y="0" width="1.02" height="83" fill="url(#g255)"/><rect x="256" y="0" width="1.02" height="83" fill="url(#g256)"/><rect x="257" y="0" width="1.02" height="83" fill="url(#g257)"/><rect x="258" y="0" width="1.02" height="83" fill="url(#g258)"/><rect x="259" y="0" width="1.02" height="83" fill="url(#g259)"/><rect x="260" y="0" width="1.02" height="83" fill="url(#g260)"/><rect x="261" y="0" width="1.02" height="83" fill="url(#g261)"/><rect x="262" y="0" width="1.02" height="83" fill="url(#g262)"/><rect x="263" y="0" width="1.02" height="83" fill="url(#g263)"/><rect x="264" y="0" width="1.02" height="83" fill="url(#g264)"/><rect x="265" y="0" width="1.02" height="83" fill="url(#g265)"/><rect x="266" y="0" width="1.02" height="83" fill="url(#g266)"/><rect x="267" y="0" width="1.02" height="83" fill="url(#g267)"/><rect x="268" y="0" width="1.02" height="83" fill="url(#g268)"/><rect x="269" y="0" width="1.02" height="83" fill="url(#g269)"/><rect x="270" y="0" width="1.02" height="83" fill="url(#g270)"/><rect x="271" y="0" width="1.02" height="83" fill="url(#g271)"/><rect x="272" y="0" width="1.02" height="83" fill="url(#g272)"/><rect x="273" y="0" width="1.02" height="83" fill="url(#g273)"/><rect x="274" y="0" width="1.02" height="83" fill="url(#g274)"/><rect x="275" y="0" width="1.02" height="83" fill="url(#g275)"/><rect x="276" y="0" width="1.02" height="83" fill="url(#g276)"/><rect x="277" y="0" width="1.02" height="83" fill="url(#g277)"/><rect x="278" y="0" width="1.02" height="83" fill="url(#g278)"/><rect x="279" y="0" width="1.02" height="83" fill="url(#g279)"/><rect x="280" y="0" width="1.02" height="83" fill="url(#g280)"/><rect x="281" y="0" width="1.02" height="83" fill="url(#g281)"/><rect x="282" y="0" width="1.02" height="83" fill="url(#g282)"/><rect x="283" y="0" width="1.02" height="83" fill="url(#g283)"/><rect x="284" y="0" width="1.02" height="83" fill="url(#g284)"/><rect x="285" y="0" width="1.02" height="83" fill="url(#g285)"/><rect x="286" y="0" width="1.02" height="83" fill="url(#g286)"/><rect x="287" y="0" width="1.02" height="83" fill="url(#g287)"/><rect x="288" y="0" width="1.02" height="83" fill="url(#g288)"/><rect x="289" y="0" width="1.02" height="83" fill="url(#g289)"/><rect x="290" y="0" width="1.02" height="83" fill="url(#g290)"/><rect x="291" y="0" width="1.02" height="83" fill="url(#g291)"/><rect x="292" y="0" width="1.02" height="83" fill="url(#g292)"/><rect x="293" y="0" width="1.02" height="83" fill="url(#g293)"/><rect x="294" y="0" width="1.02" height="83" fill="url(#g294)"/><rect x="295" y="0" width="1.02" height="83" fill="url(#g295)"/><rect x="296" y="0" width="1.02" height="83" fill="url(#g296)"/><rect x="297" y="0" width="1.02" height="83" fill="url(#g297)"/><rect x="298" y="0" width="1.02" height="83" fill="url(#g298)"/><rect x="299" y="0" width="1.02" height="83" fill="url(#g299)"/><rect x="300" y="0" width="1.02" height="83" fill="url(#g300)"/><rect x="301" y="0" width="1.02" height="83" fill="url(#g301)"/><rect x="302" y="0" width="1.02" height="83" fill="url(#g302)"/><rect x="303" y="0" width="1.02" height="83" fill="url(#g303)"/><rect x="304" y="0" width="1.02" height="83" fill="url(#g304)"/><rect x="305" y="0" width="1.02" height="83" fill="url(#g305)"/><rect x="306" y="0" width="1.02" height="83" fill="url(#g306)"/><rect x="307" y="0" width="1.02" height="83" fill="url(#g307)"/><rect x="308" y="0" width="1.02" height="83" fill="url(#g308)"/><rect x="309" y="0" width="1.02" height="83" fill="url(#g309)"/><rect x="310" y="0" width="1.02" height="83" fill="url(#g310)"/><rect x="311" y="0" width="1.02" height="83" fill="url(#g311)"/><rect x="312" y="0" width="1.02" height="83" fill="url(#g312)"/><rect x="313" y="0" width="1.02" height="83" fill="url(#g313)"/><rect x="314" y="0" width="1.02" height="83" fill="url(#g314)"/><rect x="315" y="0" width="1.02" height="83" fill="url(#g315)"/><rect x="316" y="0" width="1.02" height="83" fill="url(#g316)"/><rect x="317" y="0" width="1.02" height="83" fill="url(#g317)"/><rect x="318" y="0" width="1.02" height="83" fill="url(#g318)"/><rect x="319" y="0" width="1.02" height="83" fill="url(#g319)"/><rect x="320" y="0" width="1.02" height="83" fill="url(#g320)"/><rect x="321" y="0" width="1.02" height="83" fill="url(#g321)"/><rect x="322" y="0" width="1.02" height="83" fill="url(#g322)"/><rect x="323" y="0" width="1.02" height="83" fill="url(#g323)"/><rect x="324" y="0" width="1.02" height="83" fill="url(#g324)"/><rect x="325" y="0" width="1.02" height="83" fill="url(#g325)"/><rect x="326" y="0" width="1.02" height="83" fill="url(#g326)"/><rect x="327" y="0" width="1.02" height="83" fill="url(#g327)"/></svg>
<div class="t nofix" style="left:13.6px;top:399.6px"><span style="letter-spacing:-0.063px">Tip: Export as JSON and evaluate at </span><span class="link" style="letter-spacing:0.081px">colormeasures.org</span>.</div>
</body></html>
